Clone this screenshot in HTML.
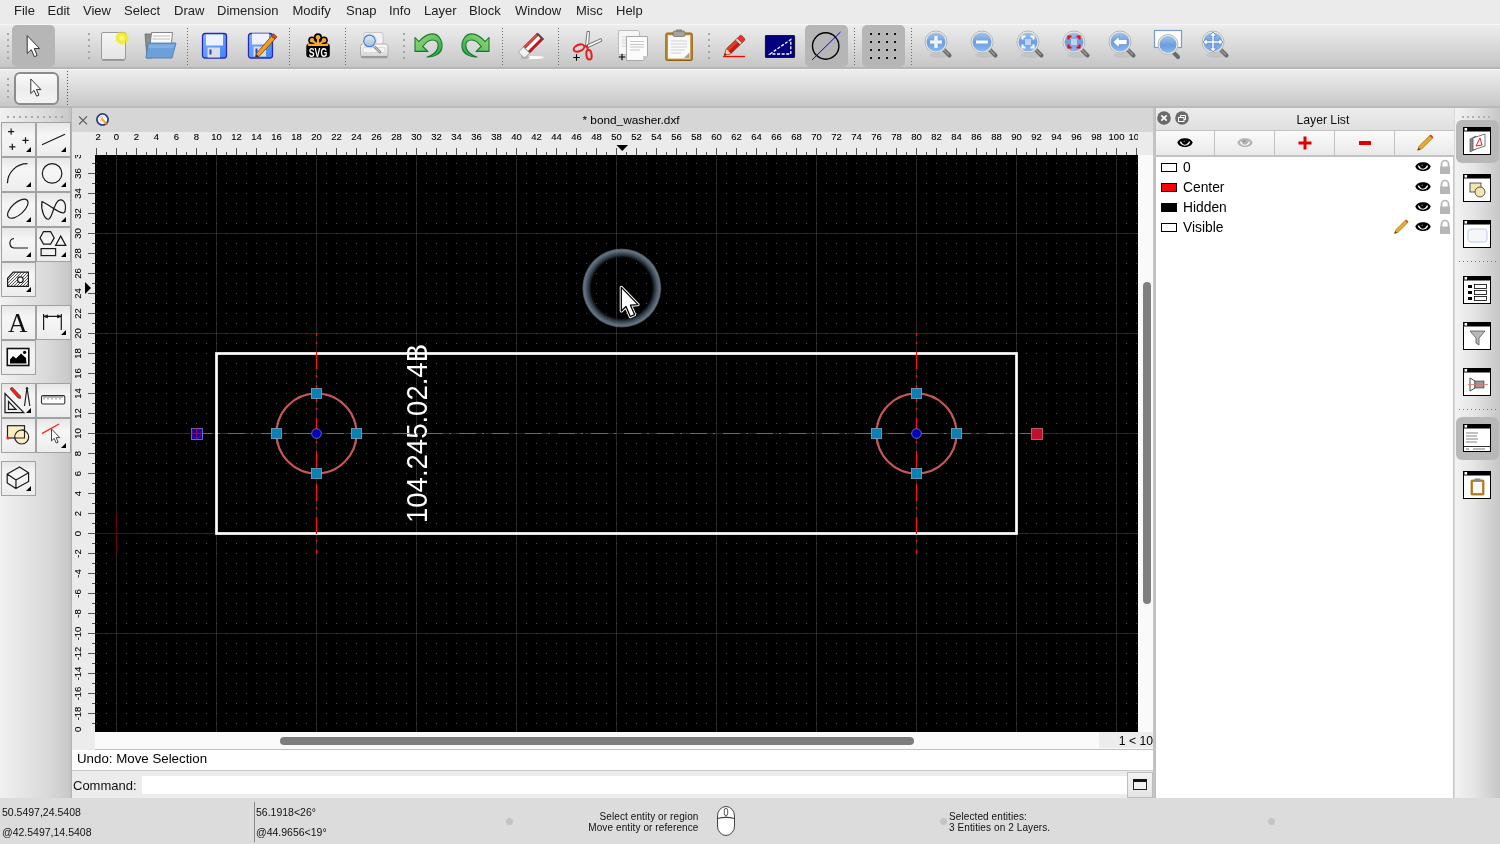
<!DOCTYPE html>
<html><head><meta charset="utf-8"><style>
html,body{margin:0;padding:0;width:1500px;height:844px;overflow:hidden;background:#ececec;font-family:"Liberation Sans", sans-serif;}
.a{position:absolute}
.t{position:absolute;white-space:nowrap;color:#1a1a1a}
</style></head><body><div style="position:absolute;left:0;top:0;width:1500px;height:844px;will-change:transform">

<div class="a" style="left:0;top:0;width:1500px;height:24px;background:#ebebeb"></div>
<div class="t" style="left:14px;top:3px;font-size:13px;line-height:16px;color:#222">File</div>
<div class="t" style="left:47.5px;top:3px;font-size:13px;line-height:16px;color:#222">Edit</div>
<div class="t" style="left:83px;top:3px;font-size:13px;line-height:16px;color:#222">View</div>
<div class="t" style="left:124px;top:3px;font-size:13px;line-height:16px;color:#222">Select</div>
<div class="t" style="left:174px;top:3px;font-size:13px;line-height:16px;color:#222">Draw</div>
<div class="t" style="left:217px;top:3px;font-size:13px;line-height:16px;color:#222">Dimension</div>
<div class="t" style="left:292.5px;top:3px;font-size:13px;line-height:16px;color:#222">Modify</div>
<div class="t" style="left:346px;top:3px;font-size:13px;line-height:16px;color:#222">Snap</div>
<div class="t" style="left:389px;top:3px;font-size:13px;line-height:16px;color:#222">Info</div>
<div class="t" style="left:424px;top:3px;font-size:13px;line-height:16px;color:#222">Layer</div>
<div class="t" style="left:469px;top:3px;font-size:13px;line-height:16px;color:#222">Block</div>
<div class="t" style="left:515px;top:3px;font-size:13px;line-height:16px;color:#222">Window</div>
<div class="t" style="left:576px;top:3px;font-size:13px;line-height:16px;color:#222">Misc</div>
<div class="t" style="left:616px;top:3px;font-size:13px;line-height:16px;color:#222">Help</div>
<div class="a" style="left:0;top:24px;width:1500px;height:45px;background:linear-gradient(#ededed,#c6c6c6);border-top:1px solid #f6f6f6;border-bottom:2px solid #b6b6b6;box-sizing:border-box"></div>
<div class="a" style="left:0;top:69px;width:1500px;height:39px;background:linear-gradient(#ededed,#c8c8c8);border-top:1px solid #f4f4f4;border-bottom:2px solid #b9b9b9;box-sizing:border-box"></div>
<div class="a" style="left:7px;top:33px;width:2px;height:2px;background:#a6a6a6"></div><div class="a" style="left:7px;top:39px;width:2px;height:2px;background:#a6a6a6"></div><div class="a" style="left:7px;top:45px;width:2px;height:2px;background:#a6a6a6"></div><div class="a" style="left:7px;top:51px;width:2px;height:2px;background:#a6a6a6"></div><div class="a" style="left:7px;top:57px;width:2px;height:2px;background:#a6a6a6"></div><div class="a" style="left:12px;top:25px;width:43px;height:42px;background:#b6b6b6;border-radius:5px"></div><svg class="a" style="left:20px;top:30px;" width="30" height="32" viewBox="0 0 30 32"><path d="M7.20 5.60 L7.20 23.42 L11.30 19.64 L14.33 26.66 L17.14 25.47 L14.22 18.56 L19.62 18.56 Z" fill="#fff" stroke="#2a2a2a" stroke-width="0.95" stroke-linejoin="round"/></svg><div class="a" style="left:88px;top:33px;width:2px;height:2px;background:#a6a6a6"></div><div class="a" style="left:88px;top:39px;width:2px;height:2px;background:#a6a6a6"></div><div class="a" style="left:88px;top:45px;width:2px;height:2px;background:#a6a6a6"></div><div class="a" style="left:88px;top:51px;width:2px;height:2px;background:#a6a6a6"></div><div class="a" style="left:88px;top:57px;width:2px;height:2px;background:#a6a6a6"></div><svg class="a" style="left:98px;top:28px;" width="32" height="36" viewBox="0 0 32 36">
      <defs><linearGradient id="nd" x1="0" y1="0" x2="0" y2="1"><stop offset="0" stop-color="#f6f6f6"/><stop offset="1" stop-color="#e4e4e4"/></linearGradient>
      <radialGradient id="glow"><stop offset="0" stop-color="#ffffe8"/><stop offset="0.25" stop-color="#fcf650"/><stop offset="0.6" stop-color="#f0e818" stop-opacity="0.9"/><stop offset="1" stop-color="#f0e800" stop-opacity="0"/></radialGradient></defs>
      <rect x="3.5" y="4.5" width="24" height="27" rx="1.5" fill="url(#nd)" stroke="#9a9a9a" stroke-width="1"/>
      <line x1="4.5" y1="32.2" x2="26.5" y2="32.2" stroke="#888" stroke-width="1"/>
      <circle cx="24" cy="10" r="7.5" fill="url(#glow)"/></svg><svg class="a" style="left:142px;top:28px;" width="36" height="34" viewBox="0 0 36 34">
      <path d="M3 6 L10 6 L11 8 L10 30 L5 30 Z" fill="#8c8c8c" stroke="#6a6a6a" stroke-width="0.8"/>
      <path d="M9.5 4.5 L30.5 4.5 L28 28 L7 28 Z" fill="#fbfbfb" stroke="#7a7a7a" stroke-width="0.9"/>
      <path d="M11 8 L28 8 M10.5 11 L28 11" stroke="#bdbdbd" stroke-width="1.2"/>
      <path d="M6 15 L34 15 L30 30 L4 30 Z" fill="#6d9fd8" stroke="#4f7fb8" stroke-width="0.9"/>
      <path d="M7 16.5 L32.5 16.5 L31.5 20 L6 20 Z" fill="#8ab6e6" opacity="0.7"/></svg><div class="a" style="left:187px;top:28px;width:1px;height:38px;background:repeating-linear-gradient(#6a6a6a 0 1px,transparent 1px 3px)"></div><svg class="a" style="left:201px;top:32px;" width="30" height="30" viewBox="0 0 30 30">
      <defs><linearGradient id="fl" x1="0" y1="0" x2="1" y2="1"><stop offset="0" stop-color="#7fb2ff"/><stop offset="1" stop-color="#3f86f0"/></linearGradient></defs>
      <rect x="1.5" y="1.5" width="24" height="24.5" rx="2.5" fill="url(#fl)" stroke="#2a2ab0" stroke-width="1.3"/>
      <rect x="5" y="2.5" width="17" height="11" fill="#eef2ff"/>
      <rect x="6.5" y="15.5" width="12.5" height="10" fill="#dcdce4"/>
      <rect x="8.5" y="17.5" width="2" height="5" fill="#1a4ad0"/></svg><svg class="a" style="left:247px;top:31px;" width="32" height="31" viewBox="0 0 32 31">
      <defs><linearGradient id="fl2" x1="0" y1="0" x2="1" y2="1"><stop offset="0" stop-color="#7fb2ff"/><stop offset="1" stop-color="#3f86f0"/></linearGradient></defs>
      <rect x="1.5" y="2.5" width="24" height="24.5" rx="2.5" fill="url(#fl2)" stroke="#2a2ab0" stroke-width="1.3"/>
      <rect x="5" y="2.5" width="17" height="11" fill="#eef2ff"/>
      <rect x="6.5" y="15.5" width="12.5" height="10" fill="#dcdce4"/>
      <rect x="8.5" y="17.5" width="2" height="5" fill="#1a4ad0"/><path d="M9 23 L24.5 5 L28 8 L12 25.5 L8.5 26.5 Z" fill="#f0a020" stroke="#8a4a10" stroke-width="0.9"/>
      <path d="M24.5 5 L26.5 2.8 L30 5.8 L28 8 Z" fill="#e04040" stroke="#8a3a10" stroke-width="0.8"/>
      <path d="M9 23 L8.5 26.5 L12 25.5 Z" fill="#333"/></svg><div class="a" style="left:289px;top:28px;width:1px;height:38px;background:repeating-linear-gradient(#6a6a6a 0 1px,transparent 1px 3px)"></div><svg class="a" style="left:303px;top:31px;" width="30" height="30" viewBox="0 0 30 30">
      <g fill="#000"><circle cx="15" cy="6.2" r="4"/><circle cx="9" cy="9.3" r="3.8"/><circle cx="21" cy="9.3" r="3.8"/>
      <path d="M8 14 L15 6 L22 14 Z"/></g>
      <rect x="3.3" y="12.4" width="23.5" height="14" rx="3" fill="#000"/>
      <g fill="#f8aa30"><circle cx="15" cy="6.2" r="2.3"/><circle cx="9" cy="9.3" r="2.2"/><circle cx="21" cy="9.3" r="2.2"/></g>
      <path d="M15 14 L15 7 M15 14 L9.5 9.8 M15 14 L20.5 9.8" stroke="#f8aa30" stroke-width="2.2"/>
      <path d="M5.5 14 L24.5 14" stroke="#f8aa30" stroke-width="1.8" stroke-linecap="round"/>
      <path d="M10 14 L15 11 L20 14 Z" fill="#f8aa30"/>
      <text x="15" y="26" text-anchor="middle" font-family='"Liberation Sans",sans-serif' font-weight="bold" font-size="13" fill="#fff" textLength="18.5" lengthAdjust="spacingAndGlyphs">SVG</text></svg><div class="a" style="left:345px;top:28px;width:1px;height:38px;background:repeating-linear-gradient(#6a6a6a 0 1px,transparent 1px 3px)"></div><svg class="a" style="left:358px;top:29px;" width="32" height="32" viewBox="0 0 32 32">
      <defs><linearGradient id="pr" x1="0" y1="0" x2="0" y2="1"><stop offset="0" stop-color="#fafafa"/><stop offset="0.6" stop-color="#e8e8e8"/><stop offset="1" stop-color="#d0d0d0"/></linearGradient>
      <linearGradient id="pl" x1="0" y1="0" x2="0" y2="1"><stop offset="0" stop-color="#e4ecf6"/><stop offset="1" stop-color="#a4bcd8"/></linearGradient></defs>
      <rect x="6" y="3.5" width="19" height="15" rx="1" fill="#f2f2f2" stroke="#c4c4c4" stroke-width="0.9"/>
      <rect x="2.5" y="15" width="27.5" height="13" rx="2.5" fill="url(#pr)" stroke="#a8a8a8" stroke-width="0.9"/>
      <rect x="3" y="27" width="26.5" height="2.3" rx="1" fill="#9a9a9a"/>
      <rect x="5" y="18.5" width="22" height="5" rx="1" fill="#f6f6f6" stroke="#c8c8c8" stroke-width="0.6"/>
      <line x1="15" y1="16.5" x2="22" y2="23" stroke="#8e8e8e" stroke-width="2.8" stroke-linecap="round"/>
      <line x1="15" y1="16.5" x2="22" y2="23" stroke="#cfcfcf" stroke-width="1" stroke-linecap="round"/>
      <circle cx="11.5" cy="11.9" r="7.2" fill="#f4f4f4" stroke="#d8d8d8" stroke-width="0.8"/>
      <circle cx="11.5" cy="11.9" r="5.8" fill="url(#pl)" stroke="#4a82d0" stroke-width="1.2"/></svg><div class="a" style="left:403px;top:33px;width:2px;height:2px;background:#a6a6a6"></div><div class="a" style="left:403px;top:39px;width:2px;height:2px;background:#a6a6a6"></div><div class="a" style="left:403px;top:45px;width:2px;height:2px;background:#a6a6a6"></div><div class="a" style="left:403px;top:51px;width:2px;height:2px;background:#a6a6a6"></div><div class="a" style="left:403px;top:57px;width:2px;height:2px;background:#a6a6a6"></div><svg class="a" style="left:413px;top:32px;" width="32" height="28" viewBox="0 0 32 28"><defs><linearGradient id="ug" x1="0" y1="0" x2="1" y2="1"><stop offset="0" stop-color="#9ada78"/><stop offset="0.55" stop-color="#62c060"/><stop offset="1" stop-color="#26a040"/></linearGradient></defs>
      <path d="M2 5.5 L2 19.4 L14.8 19.4 L9.8 14.5 C12.5 11 15.5 8 19 8 C22.5 8 25.2 10 25.2 13.5 C25.2 19 20 23.5 14.1 25 C20 25.5 27 22 28.5 17.5 C30.5 11.5 27 2.2 19.8 1.9 C15 1.7 10 5 5.9 9.7 Z" fill="url(#ug)" stroke="#137a2c" stroke-width="1.1" stroke-linejoin="round"/></svg><svg class="a" style="left:459px;top:32px;" width="32" height="28" viewBox="0 0 32 28"><g transform="translate(32,0) scale(-1,1)"><defs><linearGradient id="rg" x1="0" y1="0" x2="1" y2="1"><stop offset="0" stop-color="#9ada78"/><stop offset="0.55" stop-color="#62c060"/><stop offset="1" stop-color="#26a040"/></linearGradient></defs>
      <path d="M2 5.5 L2 19.4 L14.8 19.4 L9.8 14.5 C12.5 11 15.5 8 19 8 C22.5 8 25.2 10 25.2 13.5 C25.2 19 20 23.5 14.1 25 C20 25.5 27 22 28.5 17.5 C30.5 11.5 27 2.2 19.8 1.9 C15 1.7 10 5 5.9 9.7 Z" fill="url(#rg)" stroke="#137a2c" stroke-width="1.1" stroke-linejoin="round"/></g></svg><div class="a" style="left:502px;top:28px;width:1px;height:38px;background:repeating-linear-gradient(#6a6a6a 0 1px,transparent 1px 3px)"></div><svg class="a" style="left:515px;top:30px;" width="32" height="32" viewBox="0 0 32 32">
      <ellipse cx="17" cy="27.5" rx="12" ry="1.6" fill="#fff" opacity="0.9"/>
      <ellipse cx="10" cy="27.5" rx="4.5" ry="1.4" fill="#666" opacity="0.5"/>
      <g transform="translate(16 15.5) rotate(-45)">
        <rect x="-6.5" y="-4.3" width="20" height="8.6" fill="#c81414" stroke="#7a1010" stroke-width="0.7"/>
        <rect x="-6" y="-1.7" width="18" height="3.4" fill="#fff"/>
        <rect x="-6.5" y="-4.3" width="20" height="1.8" fill="#e04a4a"/>
        <rect x="12" y="-4.3" width="1.5" height="8.6" fill="#4a4a4a"/>
        <rect x="-13.5" y="-4.3" width="7.2" height="8.6" fill="#f2f2f2" stroke="#8a8a8a" stroke-width="0.7"/>
      </g></svg><div class="a" style="left:558px;top:28px;width:1px;height:38px;background:repeating-linear-gradient(#6a6a6a 0 1px,transparent 1px 3px)"></div><svg class="a" style="left:570px;top:29px;" width="34" height="34" viewBox="0 0 34 34">
      <path d="M17 2.5 L19.5 2.5 L18.5 17 L15.5 17 Z" fill="#fafafa" stroke="#666" stroke-width="0.9"/>
      <path d="M31 9.5 L32 12 L18 18.5 L17 16 Z" fill="#fafafa" stroke="#666" stroke-width="0.9"/>
      <ellipse cx="9" cy="19" rx="5.6" ry="3.2" transform="rotate(-22 9 19)" fill="none" stroke="#e02020" stroke-width="2"/>
      <ellipse cx="19" cy="25.8" rx="2.6" ry="4.8" transform="rotate(-8 19 25.8)" fill="none" stroke="#e02020" stroke-width="2"/>
      <path d="M14 18 L17 17 L18 21" stroke="#e02020" stroke-width="2" fill="none"/>
      <path d="M3.2 28.5 L9.8 28.5 M6.5 25.2 L6.5 31.8" stroke="#000" stroke-width="1.1"/></svg><svg class="a" style="left:615px;top:28px;" width="36" height="36" viewBox="0 0 36 36">
      <path d="M3.5 2.5 L23 2.5 L24.5 4 L24.5 26.5 L3.5 26.5 Z" fill="#f6f6f6" stroke="#bdbdbd" stroke-width="1"/>
      <path d="M7 9 L20 9 M7 12 L20 12 M7 15 L20 15 M7 18 L20 18" stroke="#d4d4d4" stroke-width="1"/>
      <path d="M11.5 8.5 L32.5 8.5 L32.5 28 L28 32.5 L11.5 32.5 Z" fill="#fbfbfb" stroke="#a8a8a8" stroke-width="1"/>
      <path d="M28 32.5 L28 28 L32.5 28 Z" fill="#c8c8c8"/>
      <path d="M15 13.5 L29 13.5 M15 16.5 L29 16.5 M15 19 L29 19 M15 22 L25 22" stroke="#c6c6c6" stroke-width="1.1"/>
      <path d="M3.7 29 L10.3 29 M7 25.7 L7 32.3" stroke="#000" stroke-width="1.1"/></svg><svg class="a" style="left:663px;top:28px;" width="32" height="36" viewBox="0 0 32 36">
      <rect x="2.8" y="5" width="26.5" height="27.5" rx="1.5" fill="#c48a28" stroke="#8a5e14" stroke-width="1"/>
      <rect x="4.9" y="7.3" width="22.3" height="23.3" fill="#fafafa"/>
      <path d="M8 13 L24 13 M8 16 L24 16 M8 19 L24 19 M8 22 L22 22 M8 25 L18 25" stroke="#d0d0d0" stroke-width="1.1"/>
      <path d="M21 30 L26.5 30 L26.5 24.5 Z" fill="#a0a0a0"/>
      <rect x="10" y="3" width="12" height="5.5" rx="1.5" fill="#a4a49a" stroke="#76766e" stroke-width="0.8"/>
      <rect x="13" y="1.5" width="6" height="2.5" fill="#8a8a82"/></svg><div class="a" style="left:708px;top:33px;width:2px;height:2px;background:#a6a6a6"></div><div class="a" style="left:708px;top:39px;width:2px;height:2px;background:#a6a6a6"></div><div class="a" style="left:708px;top:45px;width:2px;height:2px;background:#a6a6a6"></div><div class="a" style="left:708px;top:51px;width:2px;height:2px;background:#a6a6a6"></div><div class="a" style="left:708px;top:57px;width:2px;height:2px;background:#a6a6a6"></div><svg class="a" style="left:720px;top:32px;" width="28" height="28" viewBox="0 0 28 28">
      <line x1="3" y1="24.5" x2="25" y2="24.5" stroke="#ff0000" stroke-width="1.3"/>
      <g transform="translate(4.3 23.4) rotate(-44.1)">
        <path d="M0 0 L6 -3.2 L25 -3.2 C26.8 -3.2 26.8 3.2 25 3.2 L6 3.2 Z" fill="#e04020" stroke="#6a3a10" stroke-width="0.9" stroke-linejoin="round"/>
        <rect x="6" y="0" width="13.5" height="3.1" fill="#c81818"/>
        <rect x="19" y="-3.1" width="2.2" height="6.2" fill="#d4d4d4"/>
        <path d="M21.2 -3.1 L25 -3.1 C26.6 -3.1 26.6 3.1 25 3.1 L21.2 3.1 Z" fill="#f03030"/>
        <path d="M0.6 0 L6 -3 L6 3 Z" fill="#f2d4ac"/>
        <path d="M0.3 0 L2.3 -1.1 L2.3 1.1 Z" fill="#222"/>
      </g></svg><svg class="a" style="left:764px;top:34px;" width="32" height="25" viewBox="0 0 32 25">
      <rect x="1.5" y="1.5" width="29" height="22" rx="1" fill="#000080" stroke="#1a1a2a" stroke-width="1.2"/>
      <path d="M6 20 L26.8 5.5 L26.8 20 Z" fill="none" stroke="#fff" stroke-width="1.3" stroke-dasharray="3 1.6"/></svg><div class="a" style="left:805px;top:25px;width:43px;height:42px;background:#b6b6b6;border-radius:5px"></div><svg class="a" style="left:808px;top:28px;" width="36" height="36" viewBox="0 0 36 36">
      <circle cx="17.7" cy="18" r="13.2" fill="none" stroke="#000" stroke-width="1.4"/>
      <line x1="4" y1="32" x2="32.5" y2="4" stroke="#0000ff" stroke-width="1"/></svg><div class="a" style="left:854px;top:28px;width:1px;height:38px;background:repeating-linear-gradient(#6a6a6a 0 1px,transparent 1px 3px)"></div><div class="a" style="left:862px;top:25px;width:43px;height:42px;background:#b6b6b6;border-radius:5px"></div><svg class="a" style="left:0px;top:0px;" width="1" height="1" viewBox="0 0 1 1"></svg><svg class="a" style="left:0;top:0" width="910" height="68"><rect x="870" y="33" width="2" height="2" fill="#111"/><rect x="870" y="41" width="2" height="2" fill="#111"/><rect x="870" y="49" width="2" height="2" fill="#111"/><rect x="870" y="57" width="2" height="2" fill="#111"/><rect x="878" y="33" width="2" height="2" fill="#111"/><rect x="878" y="41" width="2" height="2" fill="#111"/><rect x="878" y="49" width="2" height="2" fill="#111"/><rect x="878" y="57" width="2" height="2" fill="#111"/><rect x="886" y="33" width="2" height="2" fill="#111"/><rect x="886" y="41" width="2" height="2" fill="#111"/><rect x="886" y="49" width="2" height="2" fill="#111"/><rect x="886" y="57" width="2" height="2" fill="#111"/><rect x="894" y="33" width="2" height="2" fill="#111"/><rect x="894" y="41" width="2" height="2" fill="#111"/><rect x="894" y="49" width="2" height="2" fill="#111"/><rect x="894" y="57" width="2" height="2" fill="#111"/></svg><div class="a" style="left:911px;top:28px;width:1px;height:38px;background:repeating-linear-gradient(#6a6a6a 0 1px,transparent 1px 3px)"></div><svg class="a" style="left:922px;top:28px" width="34" height="34" viewBox="0 0 34 34">
          <defs><linearGradient id="lz936" x1="0" y1="0" x2="0" y2="1"><stop offset="0" stop-color="#a4c4ec"/><stop offset="0.5" stop-color="#6a9ee0"/><stop offset="1" stop-color="#8ab8f0"/></linearGradient></defs>
          <ellipse cx="17" cy="27" rx="10" ry="3" fill="#000" opacity="0.06"/>
          <line x1="20.5" y1="20.5" x2="27.5" y2="27.5" stroke="#6a6a6a" stroke-width="4" stroke-linecap="round"/>
          <line x1="21" y1="21" x2="26.5" y2="26.5" stroke="#9a9a9a" stroke-width="1.2" stroke-linecap="round"/>
          <circle cx="14" cy="14" r="11" fill="#ecece4" stroke="#b8b8b0" stroke-width="1"/>
          <circle cx="14" cy="14" r="9.5" fill="url(#lz936)"/>
          <path d="M14 8 L14 20 M8 14 L20 14" stroke="#fff" stroke-width="3.2"/><path d="M14 8 L14 20 M8 14 L20 14" stroke="#3a5aa0" stroke-width="0.4" opacity="0.3"/></svg><svg class="a" style="left:968px;top:28px" width="34" height="34" viewBox="0 0 34 34">
          <defs><linearGradient id="lz982" x1="0" y1="0" x2="0" y2="1"><stop offset="0" stop-color="#a4c4ec"/><stop offset="0.5" stop-color="#6a9ee0"/><stop offset="1" stop-color="#8ab8f0"/></linearGradient></defs>
          <ellipse cx="17" cy="27" rx="10" ry="3" fill="#000" opacity="0.06"/>
          <line x1="20.5" y1="20.5" x2="27.5" y2="27.5" stroke="#6a6a6a" stroke-width="4" stroke-linecap="round"/>
          <line x1="21" y1="21" x2="26.5" y2="26.5" stroke="#9a9a9a" stroke-width="1.2" stroke-linecap="round"/>
          <circle cx="14" cy="14" r="11" fill="#ecece4" stroke="#b8b8b0" stroke-width="1"/>
          <circle cx="14" cy="14" r="9.5" fill="url(#lz982)"/>
          <path d="M8 14 L20 14" stroke="#fff" stroke-width="3"/></svg><svg class="a" style="left:1014px;top:28px" width="34" height="34" viewBox="0 0 34 34">
          <defs><linearGradient id="lz1028" x1="0" y1="0" x2="0" y2="1"><stop offset="0" stop-color="#a4c4ec"/><stop offset="0.5" stop-color="#6a9ee0"/><stop offset="1" stop-color="#8ab8f0"/></linearGradient></defs>
          <ellipse cx="17" cy="27" rx="10" ry="3" fill="#000" opacity="0.06"/>
          <line x1="20.5" y1="20.5" x2="27.5" y2="27.5" stroke="#6a6a6a" stroke-width="4" stroke-linecap="round"/>
          <line x1="21" y1="21" x2="26.5" y2="26.5" stroke="#9a9a9a" stroke-width="1.2" stroke-linecap="round"/>
          <circle cx="14" cy="14" r="11" fill="#ecece4" stroke="#b8b8b0" stroke-width="1"/>
          <circle cx="14" cy="14" r="9.5" fill="url(#lz1028)"/>
          <path d="M8.5 11.5 L8.5 8.5 L11.5 8.5 M16.5 8.5 L19.5 8.5 L19.5 11.5 M19.5 16.5 L19.5 19.5 L16.5 19.5 M11.5 19.5 L8.5 19.5 L8.5 16.5" fill="none" stroke="#fff" stroke-width="2"/><rect x="11" y="11" width="6" height="6" fill="#bcd4f4"/></svg><svg class="a" style="left:1060px;top:28px" width="34" height="34" viewBox="0 0 34 34">
          <defs><linearGradient id="lz1074" x1="0" y1="0" x2="0" y2="1"><stop offset="0" stop-color="#a4c4ec"/><stop offset="0.5" stop-color="#6a9ee0"/><stop offset="1" stop-color="#8ab8f0"/></linearGradient></defs>
          <ellipse cx="17" cy="27" rx="10" ry="3" fill="#000" opacity="0.06"/>
          <line x1="20.5" y1="20.5" x2="27.5" y2="27.5" stroke="#6a6a6a" stroke-width="4" stroke-linecap="round"/>
          <line x1="21" y1="21" x2="26.5" y2="26.5" stroke="#9a9a9a" stroke-width="1.2" stroke-linecap="round"/>
          <circle cx="14" cy="14" r="11" fill="#ecece4" stroke="#b8b8b0" stroke-width="1"/>
          <circle cx="14" cy="14" r="9.5" fill="url(#lz1074)"/>
          <path d="M8.5 11.5 L8.5 8.5 L11.5 8.5 M16.5 8.5 L19.5 8.5 L19.5 11.5 M19.5 16.5 L19.5 19.5 L16.5 19.5 M11.5 19.5 L8.5 19.5 L8.5 16.5" fill="none" stroke="#ff0000" stroke-width="2.2"/><rect x="11" y="11" width="6" height="6" fill="#bcd4f4"/></svg><svg class="a" style="left:1106px;top:28px" width="34" height="34" viewBox="0 0 34 34">
          <defs><linearGradient id="lz1120" x1="0" y1="0" x2="0" y2="1"><stop offset="0" stop-color="#a4c4ec"/><stop offset="0.5" stop-color="#6a9ee0"/><stop offset="1" stop-color="#8ab8f0"/></linearGradient></defs>
          <ellipse cx="17" cy="27" rx="10" ry="3" fill="#000" opacity="0.06"/>
          <line x1="20.5" y1="20.5" x2="27.5" y2="27.5" stroke="#6a6a6a" stroke-width="4" stroke-linecap="round"/>
          <line x1="21" y1="21" x2="26.5" y2="26.5" stroke="#9a9a9a" stroke-width="1.2" stroke-linecap="round"/>
          <circle cx="14" cy="14" r="11" fill="#ecece4" stroke="#b8b8b0" stroke-width="1"/>
          <circle cx="14" cy="14" r="9.5" fill="url(#lz1120)"/>
          <path d="M7 14 L13 8.5 L13 11.5 L21 11.5 L21 16.5 L13 16.5 L13 19.5 Z" fill="#fff" stroke="#5a7ab0" stroke-width="0.5"/></svg><svg class="a" style="left:1150px;top:27px" width="36" height="36" viewBox="0 0 36 36">
      <defs><linearGradient id="zw" x1="0" y1="0" x2="0" y2="1"><stop offset="0" stop-color="#a4c4ec"/><stop offset="0.55" stop-color="#6a9ee0"/><stop offset="1" stop-color="#8ab8f0"/></linearGradient></defs>
      <rect x="4.5" y="3.5" width="27" height="17" fill="#fff" stroke="#7a9ad0" stroke-width="1.2"/>
      <line x1="22" y1="24" x2="28" y2="30" stroke="#6a6a6a" stroke-width="4" stroke-linecap="round"/>
      <circle cx="18" cy="17.5" r="10" fill="#ecece4" stroke="#b8b8b0" stroke-width="1"/>
      <circle cx="18" cy="17.5" r="8.5" fill="url(#zw)"/></svg><svg class="a" style="left:1199px;top:28px" width="34" height="34" viewBox="0 0 34 34">
          <defs><linearGradient id="lz1213" x1="0" y1="0" x2="0" y2="1"><stop offset="0" stop-color="#a4c4ec"/><stop offset="0.5" stop-color="#6a9ee0"/><stop offset="1" stop-color="#8ab8f0"/></linearGradient></defs>
          <ellipse cx="17" cy="27" rx="10" ry="3" fill="#000" opacity="0.06"/>
          <line x1="20.5" y1="20.5" x2="27.5" y2="27.5" stroke="#6a6a6a" stroke-width="4" stroke-linecap="round"/>
          <line x1="21" y1="21" x2="26.5" y2="26.5" stroke="#9a9a9a" stroke-width="1.2" stroke-linecap="round"/>
          <circle cx="14" cy="14" r="11" fill="#ecece4" stroke="#b8b8b0" stroke-width="1"/>
          <circle cx="14" cy="14" r="9.5" fill="url(#lz1213)"/>
          <path d="M14 4 L10.5 8 L12.8 8 L12.8 12.8 L8 12.8 L8 10.5 L4 14 L8 17.5 L8 15.2 L12.8 15.2 L12.8 20 L10.5 20 L14 24 L17.5 20 L15.2 20 L15.2 15.2 L20 15.2 L20 17.5 L24 14 L20 10.5 L20 12.8 L15.2 12.8 L15.2 8 L17.5 8 Z" fill="#fff" stroke="#5a82c8" stroke-width="0.8"/></svg>
<div class="a" style="left:7px;top:78px;width:2px;height:2px;background:#a6a6a6"></div><div class="a" style="left:7px;top:84px;width:2px;height:2px;background:#a6a6a6"></div><div class="a" style="left:7px;top:90px;width:2px;height:2px;background:#a6a6a6"></div><div class="a" style="left:7px;top:96px;width:2px;height:2px;background:#a6a6a6"></div><div class="a" style="left:14px;top:72px;width:45px;height:33px;border:2px solid #8c8c8c;border-radius:6px;box-sizing:border-box;background:linear-gradient(#fbfbfb,#ececec 50%,#f4f4f4)"></div><svg class="a" style="left:24px;top:74px;" width="24" height="28" viewBox="0 0 24 28"><path d="M6.80 5.00 L6.80 19.52 L10.14 16.44 L12.61 22.16 L14.90 21.19 L12.52 15.56 L16.92 15.56 Z" fill="#fff" stroke="#333" stroke-width="1" stroke-linejoin="round"/></svg><div class="a" style="left:67px;top:71px;width:1px;height:35px;background:repeating-linear-gradient(#555 0 1px,transparent 1px 3px)"></div>
<div class="a" style="left:0;top:108px;width:72px;height:690px;background:linear-gradient(90deg,#f1f1f1,#dadada 65%,#cacaca 95%,#c2c2c2);border-right:1px solid #b4b4b4;box-sizing:border-box"></div>
<div class="a" style="left:7px;top:116px;width:2px;height:2px;background:#a8a8a8"></div><div class="a" style="left:13px;top:116px;width:2px;height:2px;background:#a8a8a8"></div><div class="a" style="left:19px;top:116px;width:2px;height:2px;background:#a8a8a8"></div><div class="a" style="left:25px;top:116px;width:2px;height:2px;background:#a8a8a8"></div><div class="a" style="left:31px;top:116px;width:2px;height:2px;background:#a8a8a8"></div><div class="a" style="left:37px;top:116px;width:2px;height:2px;background:#a8a8a8"></div><div class="a" style="left:43px;top:116px;width:2px;height:2px;background:#a8a8a8"></div><div class="a" style="left:49px;top:116px;width:2px;height:2px;background:#a8a8a8"></div><div class="a" style="left:55px;top:116px;width:2px;height:2px;background:#a8a8a8"></div><div class="a" style="left:61px;top:116px;width:2px;height:2px;background:#a8a8a8"></div><div class="a" style="left:1px;top:122px;width:35px;height:35px;border:1px solid #a2a2a2;box-sizing:border-box;background:linear-gradient(#e6e6e6,#f6f6f6 35%,#f2f2f2 70%,#ececec)"></div><svg class="a" style="left:1px;top:122px;" width="35" height="35" viewBox="0 0 35 35"><path d="M7 9.7 L13.2 9.7 M10.1 6.6 L10.1 12.8 M21.4 18.3 L27.6 18.3 M24.5 15.2 L24.5 21.4 M8.2 24.8 L14.4 24.8 M11.3 21.7 L11.3 27.9" fill="none" stroke="#1a1a1a" stroke-width="1.2"/><path d="M25 30 L30 30 L30 25 Z" fill="#000"/></svg><div class="a" style="left:36px;top:122px;width:35px;height:35px;border:1px solid #a2a2a2;box-sizing:border-box;background:linear-gradient(#e6e6e6,#f6f6f6 35%,#f2f2f2 70%,#ececec)"></div><svg class="a" style="left:36px;top:122px;" width="35" height="35" viewBox="0 0 35 35"><path d="M6 22.7 L29 12.2" fill="none" stroke="#1a1a1a" stroke-width="1.2"/><path d="M25 30 L30 30 L30 25 Z" fill="#000"/></svg><div class="a" style="left:1px;top:157px;width:35px;height:35px;border:1px solid #a2a2a2;box-sizing:border-box;background:linear-gradient(#e6e6e6,#f6f6f6 35%,#f2f2f2 70%,#ececec)"></div><svg class="a" style="left:1px;top:157px;" width="35" height="35" viewBox="0 0 35 35"><path d="M6.4 26.2 A20 20 0 0 1 26.4 6.6" fill="none" stroke="#1a1a1a" stroke-width="1.2"/><path d="M25 30 L30 30 L30 25 Z" fill="#000"/></svg><div class="a" style="left:36px;top:157px;width:35px;height:35px;border:1px solid #a2a2a2;box-sizing:border-box;background:linear-gradient(#e6e6e6,#f6f6f6 35%,#f2f2f2 70%,#ececec)"></div><svg class="a" style="left:36px;top:157px;" width="35" height="35" viewBox="0 0 35 35"><circle cx="16.1" cy="16.4" r="9.8" fill="none" stroke="#1a1a1a" stroke-width="1.2"/><path d="M25 30 L30 30 L30 25 Z" fill="#000"/></svg><div class="a" style="left:1px;top:192px;width:35px;height:35px;border:1px solid #a2a2a2;box-sizing:border-box;background:linear-gradient(#e6e6e6,#f6f6f6 35%,#f2f2f2 70%,#ececec)"></div><svg class="a" style="left:1px;top:192px;" width="35" height="35" viewBox="0 0 35 35"><ellipse cx="16.8" cy="16.7" rx="12.6" ry="6" transform="rotate(-42 16.8 16.7)" fill="none" stroke="#1a1a1a" stroke-width="1.2"/><path d="M25 30 L30 30 L30 25 Z" fill="#000"/></svg><div class="a" style="left:36px;top:192px;width:35px;height:35px;border:1px solid #a2a2a2;box-sizing:border-box;background:linear-gradient(#e6e6e6,#f6f6f6 35%,#f2f2f2 70%,#ececec)"></div><svg class="a" style="left:36px;top:192px;" width="35" height="35" viewBox="0 0 35 35"><path d="M6 9.5 C4.5 18 9 29 13 27 C16.5 25 17.5 13 22 9 C26 5.5 31 10 29 19.5 C27.5 25 14 13 6 9.5 Z" fill="none" stroke="#1a1a1a" stroke-width="1.2"/><path d="M25 30 L30 30 L30 25 Z" fill="#000"/></svg><div class="a" style="left:1px;top:227px;width:35px;height:35px;border:1px solid #a2a2a2;box-sizing:border-box;background:linear-gradient(#e6e6e6,#f6f6f6 35%,#f2f2f2 70%,#ececec)"></div><svg class="a" style="left:1px;top:227px;" width="35" height="35" viewBox="0 0 35 35"><path d="M13 11.5 A4.8 4.8 0 0 0 13 21 L27 21" fill="none" stroke="#1a1a1a" stroke-width="1.2"/><path d="M25 30 L30 30 L30 25 Z" fill="#000"/></svg><div class="a" style="left:36px;top:227px;width:35px;height:35px;border:1px solid #a2a2a2;box-sizing:border-box;background:linear-gradient(#e6e6e6,#f6f6f6 35%,#f2f2f2 70%,#ececec)"></div><svg class="a" style="left:36px;top:227px;" width="35" height="35" viewBox="0 0 35 35"><path d="M7.5 4.7 L14.6 4.7 L18.2 10.9 L14.6 17.1 L7.5 17.1 L4 10.9 Z" fill="none" stroke="#1a1a1a" stroke-width="1.2"/><path d="M19.6 18.4 L29.8 18.4 L24.7 9.1 Z" fill="none" stroke="#1a1a1a" stroke-width="1.2"/><rect x="5.1" y="21.6" width="14.5" height="7" fill="none" stroke="#1a1a1a" stroke-width="1.2"/><path d="M25 30 L30 30 L30 25 Z" fill="#000"/></svg><div class="a" style="left:1px;top:262px;width:35px;height:35px;border:1px solid #a2a2a2;box-sizing:border-box;background:linear-gradient(#e6e6e6,#f6f6f6 35%,#f2f2f2 70%,#ececec)"></div><svg class="a" style="left:1px;top:262px;" width="35" height="35" viewBox="0 0 35 35"><defs><clipPath id="hc"><path d="M6.6 24.3 L6.6 16.3 L12.3 10.1 L27.4 10.1 L27.4 24.3 Z"/></clipPath></defs><g clip-path="url(#hc)"><line x1="-6" y1="25" x2="9" y2="10" stroke="#333" stroke-width="0.8"/><line x1="-3" y1="25" x2="12" y2="10" stroke="#333" stroke-width="0.8"/><line x1="0" y1="25" x2="15" y2="10" stroke="#333" stroke-width="0.8"/><line x1="3" y1="25" x2="18" y2="10" stroke="#333" stroke-width="0.8"/><line x1="6" y1="25" x2="21" y2="10" stroke="#333" stroke-width="0.8"/><line x1="9" y1="25" x2="24" y2="10" stroke="#333" stroke-width="0.8"/><line x1="12" y1="25" x2="27" y2="10" stroke="#333" stroke-width="0.8"/><line x1="15" y1="25" x2="30" y2="10" stroke="#333" stroke-width="0.8"/><line x1="18" y1="25" x2="33" y2="10" stroke="#333" stroke-width="0.8"/><line x1="21" y1="25" x2="36" y2="10" stroke="#333" stroke-width="0.8"/><line x1="24" y1="25" x2="39" y2="10" stroke="#333" stroke-width="0.8"/><line x1="27" y1="25" x2="42" y2="10" stroke="#333" stroke-width="0.8"/></g><path d="M6.6 24.3 L6.6 16.3 L12.3 10.1 L27.4 10.1 L27.4 24.3 Z" fill="none" stroke="#1a1a1a" stroke-width="1.2"/><circle cx="19.4" cy="17.7" r="2.8" fill="#f4f4f4" stroke="#1a1a1a" stroke-width="1.2"/><path d="M25 30 L30 30 L30 25 Z" fill="#000"/></svg><div class="a" style="left:1px;top:305px;width:35px;height:35px;border:1px solid #a2a2a2;box-sizing:border-box;background:linear-gradient(#e6e6e6,#f6f6f6 35%,#f2f2f2 70%,#ececec)"></div><svg class="a" style="left:1px;top:305px;" width="35" height="35" viewBox="0 0 35 35"><text x="16.8" y="26.6" text-anchor="middle" font-family='"Liberation Serif",serif' font-size="27" fill="#111">A</text></svg><div class="a" style="left:36px;top:305px;width:35px;height:35px;border:1px solid #a2a2a2;box-sizing:border-box;background:linear-gradient(#e6e6e6,#f6f6f6 35%,#f2f2f2 70%,#ececec)"></div><svg class="a" style="left:36px;top:305px;" width="35" height="35" viewBox="0 0 35 35"><path d="M7.6 9 L7.6 25 M25.3 9 L25.3 25 M8 11.4 L25 11.4" fill="none" stroke="#1a1a1a" stroke-width="1.2"/><path d="M8 11.4 L11.5 9.8 L11.5 13 Z M25 11.4 L21.5 9.8 L21.5 13 Z" fill="#111" stroke="#111" stroke-width="0.6"/><path d="M25 30 L30 30 L30 25 Z" fill="#000"/></svg><div class="a" style="left:1px;top:340px;width:35px;height:35px;border:1px solid #a2a2a2;box-sizing:border-box;background:linear-gradient(#e6e6e6,#f6f6f6 35%,#f2f2f2 70%,#ececec)"></div><svg class="a" style="left:1px;top:340px;" width="35" height="35" viewBox="0 0 35 35"><rect x="6.3" y="8.5" width="21.5" height="17" fill="#fff" stroke="#111" stroke-width="1.6"/><path d="M9 23.5 L9 19.5 L12 16 L15 18.5 L20 13.5 L25 18 L25.5 23.5 Z" fill="#000"/><circle cx="23.6" cy="12.3" r="1.6" fill="#000"/></svg><div class="a" style="left:1px;top:383px;width:35px;height:35px;border:1px solid #a2a2a2;box-sizing:border-box;background:linear-gradient(#e6e6e6,#f6f6f6 35%,#f2f2f2 70%,#ececec)"></div><svg class="a" style="left:1px;top:383px;" width="35" height="35" viewBox="0 0 35 35"><path d="M4 10.5 L4 29.7 L22.8 29.7 Z" fill="none" stroke="#1a1a1a" stroke-width="1.2"/><path d="M7.5 18.5 L7.5 26.3 L15 26.3 Z" fill="none" stroke="#1a1a1a" stroke-width="1.2"/>
      <path d="M9 6 L11 4 L19.5 13 L19.5 15.5 L17 15 Z" fill="#e02a1a" stroke="#6a1a0a" stroke-width="0.6"/>
      <path d="M26 4.5 L23.5 23 M26 4.5 L28.8 23" fill="none" stroke="#222" stroke-width="1.2"/><circle cx="26" cy="5.5" r="1.3" fill="#222"/><path d="M25 30 L30 30 L30 25 Z" fill="#000"/></svg><div class="a" style="left:36px;top:383px;width:35px;height:35px;border:1px solid #a2a2a2;box-sizing:border-box;background:linear-gradient(#e6e6e6,#f6f6f6 35%,#f2f2f2 70%,#ececec)"></div><svg class="a" style="left:36px;top:383px;" width="35" height="35" viewBox="0 0 35 35"><rect x="5.5" y="12.6" width="23.3" height="8.4" rx="1.5" fill="#fff" stroke="#333" stroke-width="1.1"/><line x1="8" y1="13" x2="8" y2="16.5" stroke="#444" stroke-width="0.7"/><line x1="10" y1="13" x2="10" y2="15" stroke="#444" stroke-width="0.7"/><line x1="12" y1="13" x2="12" y2="16.5" stroke="#444" stroke-width="0.7"/><line x1="14" y1="13" x2="14" y2="15" stroke="#444" stroke-width="0.7"/><line x1="16" y1="13" x2="16" y2="16.5" stroke="#444" stroke-width="0.7"/><line x1="18" y1="13" x2="18" y2="15" stroke="#444" stroke-width="0.7"/><line x1="20" y1="13" x2="20" y2="16.5" stroke="#444" stroke-width="0.7"/><line x1="22" y1="13" x2="22" y2="15" stroke="#444" stroke-width="0.7"/><line x1="24" y1="13" x2="24" y2="16.5" stroke="#444" stroke-width="0.7"/><line x1="26" y1="13" x2="26" y2="15" stroke="#444" stroke-width="0.7"/></svg><div class="a" style="left:1px;top:418px;width:35px;height:35px;border:1px solid #a2a2a2;box-sizing:border-box;background:linear-gradient(#e6e6e6,#f6f6f6 35%,#f2f2f2 70%,#ececec)"></div><svg class="a" style="left:1px;top:418px;" width="35" height="35" viewBox="0 0 35 35"><rect x="6.5" y="7.7" width="17" height="12.3" fill="#fdf0c0" stroke="#222" stroke-width="1.2"/><circle cx="20.7" cy="19" r="7" fill="#fdf0c0" stroke="#222" stroke-width="1.2"/><path d="M20.7 12 L23.5 12 L23.5 20 L13.8 20" fill="none" stroke="#222" stroke-width="1.1"/><circle cx="6.9" cy="20" r="1.5" fill="#ff2020"/></svg><div class="a" style="left:36px;top:418px;width:35px;height:35px;border:1px solid #a2a2a2;box-sizing:border-box;background:linear-gradient(#e6e6e6,#f6f6f6 35%,#f2f2f2 70%,#ececec)"></div><svg class="a" style="left:36px;top:418px;" width="35" height="35" viewBox="0 0 35 35"><path d="M5.9 15.6 L23 6" stroke="#ff2020" stroke-width="1.3"/><path d="M15.50 11.00 L15.50 22.88 L18.24 20.36 L20.25 25.04 L22.12 24.25 L20.18 19.64 L23.78 19.64 Z" fill="#fff" stroke="#333" stroke-width="0.9"/><path d="M25 30 L30 30 L30 25 Z" fill="#000"/></svg><div class="a" style="left:1px;top:461px;width:35px;height:35px;border:1px solid #a2a2a2;box-sizing:border-box;background:linear-gradient(#e6e6e6,#f6f6f6 35%,#f2f2f2 70%,#ececec)"></div><svg class="a" style="left:1px;top:461px;" width="35" height="35" viewBox="0 0 35 35"><path d="M6.2 13 L18.5 5.9 L27.6 11.7 L15 19 Z M6.2 13 L6.2 22 L14.9 27.5 L15 19 M27.6 11.7 L27.6 20.5 L14.9 27.5" fill="none" stroke="#1a1a1a" stroke-width="1.2" stroke-linejoin="round"/><path d="M25 30 L30 30 L30 25 Z" fill="#000"/></svg>
<div class="a" style="left:72px;top:108px;width:1082px;height:24px;background:#d6d6d6"></div>
<div class="t" style="left:582.5px;top:113px;font-size:11.8px;line-height:14px;color:#000">* bond_washer.dxf</div>
<svg class="a" style="left:76px;top:112.5px" width="36" height="14" viewBox="0 0 36 14"><path d="M3 3.3 L11 11.3 M11 3.3 L3 11.3" stroke="#555" stroke-width="1.1"/><circle cx="26.5" cy="6.5" r="5.6" fill="#f4f4f8" stroke="#2a3f8f" stroke-width="1.8"/><path d="M23.5 5 L26 3 M24 8 L27 4" stroke="#e07070" stroke-width="0.6"/><path d="M25.5 5.5 L30 10.5" stroke="#f0b020" stroke-width="2"/><circle cx="30.5" cy="11" r="1.1" fill="#e06060"/></svg>
<div style="position:absolute;left:72px;top:132px;width:1082px;height:23px;background:#ebebeb"></div><svg width="1043" height="23" style="position:absolute;left:95px;top:132px" ><line x1="1.5" y1="16" x2="1.5" y2="23" stroke="#555" stroke-width="1"/><text x="1.5" y="8.3" text-anchor="middle" font-family='"Liberation Sans", sans-serif' font-size="9.5" fill="#000" stroke="#000" stroke-width="0.12">-2</text><line x1="11.5" y1="20" x2="11.5" y2="23" stroke="#555" stroke-width="1"/><line x1="21.5" y1="16" x2="21.5" y2="23" stroke="#555" stroke-width="1"/><text x="21.5" y="8.3" text-anchor="middle" font-family='"Liberation Sans", sans-serif' font-size="9.5" fill="#000" stroke="#000" stroke-width="0.12">0</text><line x1="31.5" y1="20" x2="31.5" y2="23" stroke="#555" stroke-width="1"/><line x1="41.5" y1="16" x2="41.5" y2="23" stroke="#555" stroke-width="1"/><text x="41.5" y="8.3" text-anchor="middle" font-family='"Liberation Sans", sans-serif' font-size="9.5" fill="#000" stroke="#000" stroke-width="0.12">2</text><line x1="51.5" y1="20" x2="51.5" y2="23" stroke="#555" stroke-width="1"/><line x1="61.5" y1="16" x2="61.5" y2="23" stroke="#555" stroke-width="1"/><text x="61.5" y="8.3" text-anchor="middle" font-family='"Liberation Sans", sans-serif' font-size="9.5" fill="#000" stroke="#000" stroke-width="0.12">4</text><line x1="71.5" y1="20" x2="71.5" y2="23" stroke="#555" stroke-width="1"/><line x1="81.5" y1="16" x2="81.5" y2="23" stroke="#555" stroke-width="1"/><text x="81.5" y="8.3" text-anchor="middle" font-family='"Liberation Sans", sans-serif' font-size="9.5" fill="#000" stroke="#000" stroke-width="0.12">6</text><line x1="91.5" y1="20" x2="91.5" y2="23" stroke="#555" stroke-width="1"/><line x1="101.5" y1="16" x2="101.5" y2="23" stroke="#555" stroke-width="1"/><text x="101.5" y="8.3" text-anchor="middle" font-family='"Liberation Sans", sans-serif' font-size="9.5" fill="#000" stroke="#000" stroke-width="0.12">8</text><line x1="111.5" y1="20" x2="111.5" y2="23" stroke="#555" stroke-width="1"/><line x1="121.5" y1="16" x2="121.5" y2="23" stroke="#555" stroke-width="1"/><text x="121.5" y="8.3" text-anchor="middle" font-family='"Liberation Sans", sans-serif' font-size="9.5" fill="#000" stroke="#000" stroke-width="0.12">10</text><line x1="131.5" y1="20" x2="131.5" y2="23" stroke="#555" stroke-width="1"/><line x1="141.5" y1="16" x2="141.5" y2="23" stroke="#555" stroke-width="1"/><text x="141.5" y="8.3" text-anchor="middle" font-family='"Liberation Sans", sans-serif' font-size="9.5" fill="#000" stroke="#000" stroke-width="0.12">12</text><line x1="151.5" y1="20" x2="151.5" y2="23" stroke="#555" stroke-width="1"/><line x1="161.5" y1="16" x2="161.5" y2="23" stroke="#555" stroke-width="1"/><text x="161.5" y="8.3" text-anchor="middle" font-family='"Liberation Sans", sans-serif' font-size="9.5" fill="#000" stroke="#000" stroke-width="0.12">14</text><line x1="171.5" y1="20" x2="171.5" y2="23" stroke="#555" stroke-width="1"/><line x1="181.5" y1="16" x2="181.5" y2="23" stroke="#555" stroke-width="1"/><text x="181.5" y="8.3" text-anchor="middle" font-family='"Liberation Sans", sans-serif' font-size="9.5" fill="#000" stroke="#000" stroke-width="0.12">16</text><line x1="191.5" y1="20" x2="191.5" y2="23" stroke="#555" stroke-width="1"/><line x1="201.5" y1="16" x2="201.5" y2="23" stroke="#555" stroke-width="1"/><text x="201.5" y="8.3" text-anchor="middle" font-family='"Liberation Sans", sans-serif' font-size="9.5" fill="#000" stroke="#000" stroke-width="0.12">18</text><line x1="211.5" y1="20" x2="211.5" y2="23" stroke="#555" stroke-width="1"/><line x1="221.5" y1="16" x2="221.5" y2="23" stroke="#555" stroke-width="1"/><text x="221.5" y="8.3" text-anchor="middle" font-family='"Liberation Sans", sans-serif' font-size="9.5" fill="#000" stroke="#000" stroke-width="0.12">20</text><line x1="231.5" y1="20" x2="231.5" y2="23" stroke="#555" stroke-width="1"/><line x1="241.5" y1="16" x2="241.5" y2="23" stroke="#555" stroke-width="1"/><text x="241.5" y="8.3" text-anchor="middle" font-family='"Liberation Sans", sans-serif' font-size="9.5" fill="#000" stroke="#000" stroke-width="0.12">22</text><line x1="251.5" y1="20" x2="251.5" y2="23" stroke="#555" stroke-width="1"/><line x1="261.5" y1="16" x2="261.5" y2="23" stroke="#555" stroke-width="1"/><text x="261.5" y="8.3" text-anchor="middle" font-family='"Liberation Sans", sans-serif' font-size="9.5" fill="#000" stroke="#000" stroke-width="0.12">24</text><line x1="271.5" y1="20" x2="271.5" y2="23" stroke="#555" stroke-width="1"/><line x1="281.5" y1="16" x2="281.5" y2="23" stroke="#555" stroke-width="1"/><text x="281.5" y="8.3" text-anchor="middle" font-family='"Liberation Sans", sans-serif' font-size="9.5" fill="#000" stroke="#000" stroke-width="0.12">26</text><line x1="291.5" y1="20" x2="291.5" y2="23" stroke="#555" stroke-width="1"/><line x1="301.5" y1="16" x2="301.5" y2="23" stroke="#555" stroke-width="1"/><text x="301.5" y="8.3" text-anchor="middle" font-family='"Liberation Sans", sans-serif' font-size="9.5" fill="#000" stroke="#000" stroke-width="0.12">28</text><line x1="311.5" y1="20" x2="311.5" y2="23" stroke="#555" stroke-width="1"/><line x1="321.5" y1="16" x2="321.5" y2="23" stroke="#555" stroke-width="1"/><text x="321.5" y="8.3" text-anchor="middle" font-family='"Liberation Sans", sans-serif' font-size="9.5" fill="#000" stroke="#000" stroke-width="0.12">30</text><line x1="331.5" y1="20" x2="331.5" y2="23" stroke="#555" stroke-width="1"/><line x1="341.5" y1="16" x2="341.5" y2="23" stroke="#555" stroke-width="1"/><text x="341.5" y="8.3" text-anchor="middle" font-family='"Liberation Sans", sans-serif' font-size="9.5" fill="#000" stroke="#000" stroke-width="0.12">32</text><line x1="351.5" y1="20" x2="351.5" y2="23" stroke="#555" stroke-width="1"/><line x1="361.5" y1="16" x2="361.5" y2="23" stroke="#555" stroke-width="1"/><text x="361.5" y="8.3" text-anchor="middle" font-family='"Liberation Sans", sans-serif' font-size="9.5" fill="#000" stroke="#000" stroke-width="0.12">34</text><line x1="371.5" y1="20" x2="371.5" y2="23" stroke="#555" stroke-width="1"/><line x1="381.5" y1="16" x2="381.5" y2="23" stroke="#555" stroke-width="1"/><text x="381.5" y="8.3" text-anchor="middle" font-family='"Liberation Sans", sans-serif' font-size="9.5" fill="#000" stroke="#000" stroke-width="0.12">36</text><line x1="391.5" y1="20" x2="391.5" y2="23" stroke="#555" stroke-width="1"/><line x1="401.5" y1="16" x2="401.5" y2="23" stroke="#555" stroke-width="1"/><text x="401.5" y="8.3" text-anchor="middle" font-family='"Liberation Sans", sans-serif' font-size="9.5" fill="#000" stroke="#000" stroke-width="0.12">38</text><line x1="411.5" y1="20" x2="411.5" y2="23" stroke="#555" stroke-width="1"/><line x1="421.5" y1="16" x2="421.5" y2="23" stroke="#555" stroke-width="1"/><text x="421.5" y="8.3" text-anchor="middle" font-family='"Liberation Sans", sans-serif' font-size="9.5" fill="#000" stroke="#000" stroke-width="0.12">40</text><line x1="431.5" y1="20" x2="431.5" y2="23" stroke="#555" stroke-width="1"/><line x1="441.5" y1="16" x2="441.5" y2="23" stroke="#555" stroke-width="1"/><text x="441.5" y="8.3" text-anchor="middle" font-family='"Liberation Sans", sans-serif' font-size="9.5" fill="#000" stroke="#000" stroke-width="0.12">42</text><line x1="451.5" y1="20" x2="451.5" y2="23" stroke="#555" stroke-width="1"/><line x1="461.5" y1="16" x2="461.5" y2="23" stroke="#555" stroke-width="1"/><text x="461.5" y="8.3" text-anchor="middle" font-family='"Liberation Sans", sans-serif' font-size="9.5" fill="#000" stroke="#000" stroke-width="0.12">44</text><line x1="471.5" y1="20" x2="471.5" y2="23" stroke="#555" stroke-width="1"/><line x1="481.5" y1="16" x2="481.5" y2="23" stroke="#555" stroke-width="1"/><text x="481.5" y="8.3" text-anchor="middle" font-family='"Liberation Sans", sans-serif' font-size="9.5" fill="#000" stroke="#000" stroke-width="0.12">46</text><line x1="491.5" y1="20" x2="491.5" y2="23" stroke="#555" stroke-width="1"/><line x1="501.5" y1="16" x2="501.5" y2="23" stroke="#555" stroke-width="1"/><text x="501.5" y="8.3" text-anchor="middle" font-family='"Liberation Sans", sans-serif' font-size="9.5" fill="#000" stroke="#000" stroke-width="0.12">48</text><line x1="511.5" y1="20" x2="511.5" y2="23" stroke="#555" stroke-width="1"/><line x1="521.5" y1="16" x2="521.5" y2="23" stroke="#555" stroke-width="1"/><text x="521.5" y="8.3" text-anchor="middle" font-family='"Liberation Sans", sans-serif' font-size="9.5" fill="#000" stroke="#000" stroke-width="0.12">50</text><line x1="531.5" y1="20" x2="531.5" y2="23" stroke="#555" stroke-width="1"/><line x1="541.5" y1="16" x2="541.5" y2="23" stroke="#555" stroke-width="1"/><text x="541.5" y="8.3" text-anchor="middle" font-family='"Liberation Sans", sans-serif' font-size="9.5" fill="#000" stroke="#000" stroke-width="0.12">52</text><line x1="551.5" y1="20" x2="551.5" y2="23" stroke="#555" stroke-width="1"/><line x1="561.5" y1="16" x2="561.5" y2="23" stroke="#555" stroke-width="1"/><text x="561.5" y="8.3" text-anchor="middle" font-family='"Liberation Sans", sans-serif' font-size="9.5" fill="#000" stroke="#000" stroke-width="0.12">54</text><line x1="571.5" y1="20" x2="571.5" y2="23" stroke="#555" stroke-width="1"/><line x1="581.5" y1="16" x2="581.5" y2="23" stroke="#555" stroke-width="1"/><text x="581.5" y="8.3" text-anchor="middle" font-family='"Liberation Sans", sans-serif' font-size="9.5" fill="#000" stroke="#000" stroke-width="0.12">56</text><line x1="591.5" y1="20" x2="591.5" y2="23" stroke="#555" stroke-width="1"/><line x1="601.5" y1="16" x2="601.5" y2="23" stroke="#555" stroke-width="1"/><text x="601.5" y="8.3" text-anchor="middle" font-family='"Liberation Sans", sans-serif' font-size="9.5" fill="#000" stroke="#000" stroke-width="0.12">58</text><line x1="611.5" y1="20" x2="611.5" y2="23" stroke="#555" stroke-width="1"/><line x1="621.5" y1="16" x2="621.5" y2="23" stroke="#555" stroke-width="1"/><text x="621.5" y="8.3" text-anchor="middle" font-family='"Liberation Sans", sans-serif' font-size="9.5" fill="#000" stroke="#000" stroke-width="0.12">60</text><line x1="631.5" y1="20" x2="631.5" y2="23" stroke="#555" stroke-width="1"/><line x1="641.5" y1="16" x2="641.5" y2="23" stroke="#555" stroke-width="1"/><text x="641.5" y="8.3" text-anchor="middle" font-family='"Liberation Sans", sans-serif' font-size="9.5" fill="#000" stroke="#000" stroke-width="0.12">62</text><line x1="651.5" y1="20" x2="651.5" y2="23" stroke="#555" stroke-width="1"/><line x1="661.5" y1="16" x2="661.5" y2="23" stroke="#555" stroke-width="1"/><text x="661.5" y="8.3" text-anchor="middle" font-family='"Liberation Sans", sans-serif' font-size="9.5" fill="#000" stroke="#000" stroke-width="0.12">64</text><line x1="671.5" y1="20" x2="671.5" y2="23" stroke="#555" stroke-width="1"/><line x1="681.5" y1="16" x2="681.5" y2="23" stroke="#555" stroke-width="1"/><text x="681.5" y="8.3" text-anchor="middle" font-family='"Liberation Sans", sans-serif' font-size="9.5" fill="#000" stroke="#000" stroke-width="0.12">66</text><line x1="691.5" y1="20" x2="691.5" y2="23" stroke="#555" stroke-width="1"/><line x1="701.5" y1="16" x2="701.5" y2="23" stroke="#555" stroke-width="1"/><text x="701.5" y="8.3" text-anchor="middle" font-family='"Liberation Sans", sans-serif' font-size="9.5" fill="#000" stroke="#000" stroke-width="0.12">68</text><line x1="711.5" y1="20" x2="711.5" y2="23" stroke="#555" stroke-width="1"/><line x1="721.5" y1="16" x2="721.5" y2="23" stroke="#555" stroke-width="1"/><text x="721.5" y="8.3" text-anchor="middle" font-family='"Liberation Sans", sans-serif' font-size="9.5" fill="#000" stroke="#000" stroke-width="0.12">70</text><line x1="731.5" y1="20" x2="731.5" y2="23" stroke="#555" stroke-width="1"/><line x1="741.5" y1="16" x2="741.5" y2="23" stroke="#555" stroke-width="1"/><text x="741.5" y="8.3" text-anchor="middle" font-family='"Liberation Sans", sans-serif' font-size="9.5" fill="#000" stroke="#000" stroke-width="0.12">72</text><line x1="751.5" y1="20" x2="751.5" y2="23" stroke="#555" stroke-width="1"/><line x1="761.5" y1="16" x2="761.5" y2="23" stroke="#555" stroke-width="1"/><text x="761.5" y="8.3" text-anchor="middle" font-family='"Liberation Sans", sans-serif' font-size="9.5" fill="#000" stroke="#000" stroke-width="0.12">74</text><line x1="771.5" y1="20" x2="771.5" y2="23" stroke="#555" stroke-width="1"/><line x1="781.5" y1="16" x2="781.5" y2="23" stroke="#555" stroke-width="1"/><text x="781.5" y="8.3" text-anchor="middle" font-family='"Liberation Sans", sans-serif' font-size="9.5" fill="#000" stroke="#000" stroke-width="0.12">76</text><line x1="791.5" y1="20" x2="791.5" y2="23" stroke="#555" stroke-width="1"/><line x1="801.5" y1="16" x2="801.5" y2="23" stroke="#555" stroke-width="1"/><text x="801.5" y="8.3" text-anchor="middle" font-family='"Liberation Sans", sans-serif' font-size="9.5" fill="#000" stroke="#000" stroke-width="0.12">78</text><line x1="811.5" y1="20" x2="811.5" y2="23" stroke="#555" stroke-width="1"/><line x1="821.5" y1="16" x2="821.5" y2="23" stroke="#555" stroke-width="1"/><text x="821.5" y="8.3" text-anchor="middle" font-family='"Liberation Sans", sans-serif' font-size="9.5" fill="#000" stroke="#000" stroke-width="0.12">80</text><line x1="831.5" y1="20" x2="831.5" y2="23" stroke="#555" stroke-width="1"/><line x1="841.5" y1="16" x2="841.5" y2="23" stroke="#555" stroke-width="1"/><text x="841.5" y="8.3" text-anchor="middle" font-family='"Liberation Sans", sans-serif' font-size="9.5" fill="#000" stroke="#000" stroke-width="0.12">82</text><line x1="851.5" y1="20" x2="851.5" y2="23" stroke="#555" stroke-width="1"/><line x1="861.5" y1="16" x2="861.5" y2="23" stroke="#555" stroke-width="1"/><text x="861.5" y="8.3" text-anchor="middle" font-family='"Liberation Sans", sans-serif' font-size="9.5" fill="#000" stroke="#000" stroke-width="0.12">84</text><line x1="871.5" y1="20" x2="871.5" y2="23" stroke="#555" stroke-width="1"/><line x1="881.5" y1="16" x2="881.5" y2="23" stroke="#555" stroke-width="1"/><text x="881.5" y="8.3" text-anchor="middle" font-family='"Liberation Sans", sans-serif' font-size="9.5" fill="#000" stroke="#000" stroke-width="0.12">86</text><line x1="891.5" y1="20" x2="891.5" y2="23" stroke="#555" stroke-width="1"/><line x1="901.5" y1="16" x2="901.5" y2="23" stroke="#555" stroke-width="1"/><text x="901.5" y="8.3" text-anchor="middle" font-family='"Liberation Sans", sans-serif' font-size="9.5" fill="#000" stroke="#000" stroke-width="0.12">88</text><line x1="911.5" y1="20" x2="911.5" y2="23" stroke="#555" stroke-width="1"/><line x1="921.5" y1="16" x2="921.5" y2="23" stroke="#555" stroke-width="1"/><text x="921.5" y="8.3" text-anchor="middle" font-family='"Liberation Sans", sans-serif' font-size="9.5" fill="#000" stroke="#000" stroke-width="0.12">90</text><line x1="931.5" y1="20" x2="931.5" y2="23" stroke="#555" stroke-width="1"/><line x1="941.5" y1="16" x2="941.5" y2="23" stroke="#555" stroke-width="1"/><text x="941.5" y="8.3" text-anchor="middle" font-family='"Liberation Sans", sans-serif' font-size="9.5" fill="#000" stroke="#000" stroke-width="0.12">92</text><line x1="951.5" y1="20" x2="951.5" y2="23" stroke="#555" stroke-width="1"/><line x1="961.5" y1="16" x2="961.5" y2="23" stroke="#555" stroke-width="1"/><text x="961.5" y="8.3" text-anchor="middle" font-family='"Liberation Sans", sans-serif' font-size="9.5" fill="#000" stroke="#000" stroke-width="0.12">94</text><line x1="971.5" y1="20" x2="971.5" y2="23" stroke="#555" stroke-width="1"/><line x1="981.5" y1="16" x2="981.5" y2="23" stroke="#555" stroke-width="1"/><text x="981.5" y="8.3" text-anchor="middle" font-family='"Liberation Sans", sans-serif' font-size="9.5" fill="#000" stroke="#000" stroke-width="0.12">96</text><line x1="991.5" y1="20" x2="991.5" y2="23" stroke="#555" stroke-width="1"/><line x1="1001.5" y1="16" x2="1001.5" y2="23" stroke="#555" stroke-width="1"/><text x="1001.5" y="8.3" text-anchor="middle" font-family='"Liberation Sans", sans-serif' font-size="9.5" fill="#000" stroke="#000" stroke-width="0.12">98</text><line x1="1011.5" y1="20" x2="1011.5" y2="23" stroke="#555" stroke-width="1"/><line x1="1021.5" y1="16" x2="1021.5" y2="23" stroke="#555" stroke-width="1"/><text x="1021.5" y="8.3" text-anchor="middle" font-family='"Liberation Sans", sans-serif' font-size="9.5" fill="#000" stroke="#000" stroke-width="0.12">100</text><line x1="1031.5" y1="20" x2="1031.5" y2="23" stroke="#555" stroke-width="1"/><line x1="1041.5" y1="16" x2="1041.5" y2="23" stroke="#555" stroke-width="1"/><text x="1041.5" y="8.3" text-anchor="middle" font-family='"Liberation Sans", sans-serif' font-size="9.5" fill="#000" stroke="#000" stroke-width="0.12">102</text><path d="M521.5 13 L533 13 L527.3 19 Z" fill="#000"/></svg><div style="position:absolute;left:72px;top:155px;width:23px;height:577px;background:#ebebeb"></div><svg width="23" height="577" style="position:absolute;left:72px;top:155px"><line x1="16" y1="578.5" x2="23" y2="578.5" stroke="#555" stroke-width="1"/><text x="0" y="0" transform="translate(9.3,578.5) rotate(-90)" text-anchor="middle" font-family='"Liberation Sans", sans-serif' font-size="9.5" fill="#000" stroke="#000" stroke-width="0.12">-20</text><line x1="20" y1="568.5" x2="23" y2="568.5" stroke="#555" stroke-width="1"/><line x1="16" y1="558.5" x2="23" y2="558.5" stroke="#555" stroke-width="1"/><text x="0" y="0" transform="translate(9.3,558.5) rotate(-90)" text-anchor="middle" font-family='"Liberation Sans", sans-serif' font-size="9.5" fill="#000" stroke="#000" stroke-width="0.12">-18</text><line x1="20" y1="548.5" x2="23" y2="548.5" stroke="#555" stroke-width="1"/><line x1="16" y1="538.5" x2="23" y2="538.5" stroke="#555" stroke-width="1"/><text x="0" y="0" transform="translate(9.3,538.5) rotate(-90)" text-anchor="middle" font-family='"Liberation Sans", sans-serif' font-size="9.5" fill="#000" stroke="#000" stroke-width="0.12">-16</text><line x1="20" y1="528.5" x2="23" y2="528.5" stroke="#555" stroke-width="1"/><line x1="16" y1="518.5" x2="23" y2="518.5" stroke="#555" stroke-width="1"/><text x="0" y="0" transform="translate(9.3,518.5) rotate(-90)" text-anchor="middle" font-family='"Liberation Sans", sans-serif' font-size="9.5" fill="#000" stroke="#000" stroke-width="0.12">-14</text><line x1="20" y1="508.5" x2="23" y2="508.5" stroke="#555" stroke-width="1"/><line x1="16" y1="498.5" x2="23" y2="498.5" stroke="#555" stroke-width="1"/><text x="0" y="0" transform="translate(9.3,498.5) rotate(-90)" text-anchor="middle" font-family='"Liberation Sans", sans-serif' font-size="9.5" fill="#000" stroke="#000" stroke-width="0.12">-12</text><line x1="20" y1="488.5" x2="23" y2="488.5" stroke="#555" stroke-width="1"/><line x1="16" y1="478.5" x2="23" y2="478.5" stroke="#555" stroke-width="1"/><text x="0" y="0" transform="translate(9.3,478.5) rotate(-90)" text-anchor="middle" font-family='"Liberation Sans", sans-serif' font-size="9.5" fill="#000" stroke="#000" stroke-width="0.12">-10</text><line x1="20" y1="468.5" x2="23" y2="468.5" stroke="#555" stroke-width="1"/><line x1="16" y1="458.5" x2="23" y2="458.5" stroke="#555" stroke-width="1"/><text x="0" y="0" transform="translate(9.3,458.5) rotate(-90)" text-anchor="middle" font-family='"Liberation Sans", sans-serif' font-size="9.5" fill="#000" stroke="#000" stroke-width="0.12">-8</text><line x1="20" y1="448.5" x2="23" y2="448.5" stroke="#555" stroke-width="1"/><line x1="16" y1="438.5" x2="23" y2="438.5" stroke="#555" stroke-width="1"/><text x="0" y="0" transform="translate(9.3,438.5) rotate(-90)" text-anchor="middle" font-family='"Liberation Sans", sans-serif' font-size="9.5" fill="#000" stroke="#000" stroke-width="0.12">-6</text><line x1="20" y1="428.5" x2="23" y2="428.5" stroke="#555" stroke-width="1"/><line x1="16" y1="418.5" x2="23" y2="418.5" stroke="#555" stroke-width="1"/><text x="0" y="0" transform="translate(9.3,418.5) rotate(-90)" text-anchor="middle" font-family='"Liberation Sans", sans-serif' font-size="9.5" fill="#000" stroke="#000" stroke-width="0.12">-4</text><line x1="20" y1="408.5" x2="23" y2="408.5" stroke="#555" stroke-width="1"/><line x1="16" y1="398.5" x2="23" y2="398.5" stroke="#555" stroke-width="1"/><text x="0" y="0" transform="translate(9.3,398.5) rotate(-90)" text-anchor="middle" font-family='"Liberation Sans", sans-serif' font-size="9.5" fill="#000" stroke="#000" stroke-width="0.12">-2</text><line x1="20" y1="388.5" x2="23" y2="388.5" stroke="#555" stroke-width="1"/><line x1="16" y1="378.5" x2="23" y2="378.5" stroke="#555" stroke-width="1"/><text x="0" y="0" transform="translate(9.3,378.5) rotate(-90)" text-anchor="middle" font-family='"Liberation Sans", sans-serif' font-size="9.5" fill="#000" stroke="#000" stroke-width="0.12">0</text><line x1="20" y1="368.5" x2="23" y2="368.5" stroke="#555" stroke-width="1"/><line x1="16" y1="358.5" x2="23" y2="358.5" stroke="#555" stroke-width="1"/><text x="0" y="0" transform="translate(9.3,358.5) rotate(-90)" text-anchor="middle" font-family='"Liberation Sans", sans-serif' font-size="9.5" fill="#000" stroke="#000" stroke-width="0.12">2</text><line x1="20" y1="348.5" x2="23" y2="348.5" stroke="#555" stroke-width="1"/><line x1="16" y1="338.5" x2="23" y2="338.5" stroke="#555" stroke-width="1"/><text x="0" y="0" transform="translate(9.3,338.5) rotate(-90)" text-anchor="middle" font-family='"Liberation Sans", sans-serif' font-size="9.5" fill="#000" stroke="#000" stroke-width="0.12">4</text><line x1="20" y1="328.5" x2="23" y2="328.5" stroke="#555" stroke-width="1"/><line x1="16" y1="318.5" x2="23" y2="318.5" stroke="#555" stroke-width="1"/><text x="0" y="0" transform="translate(9.3,318.5) rotate(-90)" text-anchor="middle" font-family='"Liberation Sans", sans-serif' font-size="9.5" fill="#000" stroke="#000" stroke-width="0.12">6</text><line x1="20" y1="308.5" x2="23" y2="308.5" stroke="#555" stroke-width="1"/><line x1="16" y1="298.5" x2="23" y2="298.5" stroke="#555" stroke-width="1"/><text x="0" y="0" transform="translate(9.3,298.5) rotate(-90)" text-anchor="middle" font-family='"Liberation Sans", sans-serif' font-size="9.5" fill="#000" stroke="#000" stroke-width="0.12">8</text><line x1="20" y1="288.5" x2="23" y2="288.5" stroke="#555" stroke-width="1"/><line x1="16" y1="278.5" x2="23" y2="278.5" stroke="#555" stroke-width="1"/><text x="0" y="0" transform="translate(9.3,278.5) rotate(-90)" text-anchor="middle" font-family='"Liberation Sans", sans-serif' font-size="9.5" fill="#000" stroke="#000" stroke-width="0.12">10</text><line x1="20" y1="268.5" x2="23" y2="268.5" stroke="#555" stroke-width="1"/><line x1="16" y1="258.5" x2="23" y2="258.5" stroke="#555" stroke-width="1"/><text x="0" y="0" transform="translate(9.3,258.5) rotate(-90)" text-anchor="middle" font-family='"Liberation Sans", sans-serif' font-size="9.5" fill="#000" stroke="#000" stroke-width="0.12">12</text><line x1="20" y1="248.5" x2="23" y2="248.5" stroke="#555" stroke-width="1"/><line x1="16" y1="238.5" x2="23" y2="238.5" stroke="#555" stroke-width="1"/><text x="0" y="0" transform="translate(9.3,238.5) rotate(-90)" text-anchor="middle" font-family='"Liberation Sans", sans-serif' font-size="9.5" fill="#000" stroke="#000" stroke-width="0.12">14</text><line x1="20" y1="228.5" x2="23" y2="228.5" stroke="#555" stroke-width="1"/><line x1="16" y1="218.5" x2="23" y2="218.5" stroke="#555" stroke-width="1"/><text x="0" y="0" transform="translate(9.3,218.5) rotate(-90)" text-anchor="middle" font-family='"Liberation Sans", sans-serif' font-size="9.5" fill="#000" stroke="#000" stroke-width="0.12">16</text><line x1="20" y1="208.5" x2="23" y2="208.5" stroke="#555" stroke-width="1"/><line x1="16" y1="198.5" x2="23" y2="198.5" stroke="#555" stroke-width="1"/><text x="0" y="0" transform="translate(9.3,198.5) rotate(-90)" text-anchor="middle" font-family='"Liberation Sans", sans-serif' font-size="9.5" fill="#000" stroke="#000" stroke-width="0.12">18</text><line x1="20" y1="188.5" x2="23" y2="188.5" stroke="#555" stroke-width="1"/><line x1="16" y1="178.5" x2="23" y2="178.5" stroke="#555" stroke-width="1"/><text x="0" y="0" transform="translate(9.3,178.5) rotate(-90)" text-anchor="middle" font-family='"Liberation Sans", sans-serif' font-size="9.5" fill="#000" stroke="#000" stroke-width="0.12">20</text><line x1="20" y1="168.5" x2="23" y2="168.5" stroke="#555" stroke-width="1"/><line x1="16" y1="158.5" x2="23" y2="158.5" stroke="#555" stroke-width="1"/><text x="0" y="0" transform="translate(9.3,158.5) rotate(-90)" text-anchor="middle" font-family='"Liberation Sans", sans-serif' font-size="9.5" fill="#000" stroke="#000" stroke-width="0.12">22</text><line x1="20" y1="148.5" x2="23" y2="148.5" stroke="#555" stroke-width="1"/><line x1="16" y1="138.5" x2="23" y2="138.5" stroke="#555" stroke-width="1"/><text x="0" y="0" transform="translate(9.3,138.5) rotate(-90)" text-anchor="middle" font-family='"Liberation Sans", sans-serif' font-size="9.5" fill="#000" stroke="#000" stroke-width="0.12">24</text><line x1="20" y1="128.5" x2="23" y2="128.5" stroke="#555" stroke-width="1"/><line x1="16" y1="118.5" x2="23" y2="118.5" stroke="#555" stroke-width="1"/><text x="0" y="0" transform="translate(9.3,118.5) rotate(-90)" text-anchor="middle" font-family='"Liberation Sans", sans-serif' font-size="9.5" fill="#000" stroke="#000" stroke-width="0.12">26</text><line x1="20" y1="108.5" x2="23" y2="108.5" stroke="#555" stroke-width="1"/><line x1="16" y1="98.5" x2="23" y2="98.5" stroke="#555" stroke-width="1"/><text x="0" y="0" transform="translate(9.3,98.5) rotate(-90)" text-anchor="middle" font-family='"Liberation Sans", sans-serif' font-size="9.5" fill="#000" stroke="#000" stroke-width="0.12">28</text><line x1="20" y1="88.5" x2="23" y2="88.5" stroke="#555" stroke-width="1"/><line x1="16" y1="78.5" x2="23" y2="78.5" stroke="#555" stroke-width="1"/><text x="0" y="0" transform="translate(9.3,78.5) rotate(-90)" text-anchor="middle" font-family='"Liberation Sans", sans-serif' font-size="9.5" fill="#000" stroke="#000" stroke-width="0.12">30</text><line x1="20" y1="68.5" x2="23" y2="68.5" stroke="#555" stroke-width="1"/><line x1="16" y1="58.5" x2="23" y2="58.5" stroke="#555" stroke-width="1"/><text x="0" y="0" transform="translate(9.3,58.5) rotate(-90)" text-anchor="middle" font-family='"Liberation Sans", sans-serif' font-size="9.5" fill="#000" stroke="#000" stroke-width="0.12">32</text><line x1="20" y1="48.5" x2="23" y2="48.5" stroke="#555" stroke-width="1"/><line x1="16" y1="38.5" x2="23" y2="38.5" stroke="#555" stroke-width="1"/><text x="0" y="0" transform="translate(9.3,38.5) rotate(-90)" text-anchor="middle" font-family='"Liberation Sans", sans-serif' font-size="9.5" fill="#000" stroke="#000" stroke-width="0.12">34</text><line x1="20" y1="28.5" x2="23" y2="28.5" stroke="#555" stroke-width="1"/><line x1="16" y1="18.5" x2="23" y2="18.5" stroke="#555" stroke-width="1"/><text x="0" y="0" transform="translate(9.3,18.5) rotate(-90)" text-anchor="middle" font-family='"Liberation Sans", sans-serif' font-size="9.5" fill="#000" stroke="#000" stroke-width="0.12">36</text><line x1="20" y1="8.5" x2="23" y2="8.5" stroke="#555" stroke-width="1"/><line x1="16" y1="-1.5" x2="23" y2="-1.5" stroke="#555" stroke-width="1"/><text x="0" y="0" transform="translate(9.3,-1.5) rotate(-90)" text-anchor="middle" font-family='"Liberation Sans", sans-serif' font-size="9.5" fill="#000" stroke="#000" stroke-width="0.12">38</text><path d="M13 127 L13 139 L19 133 Z" fill="#000"/></svg>
<svg width="1043" height="577" viewBox="0 0 1043 577" style="position:absolute;left:95px;top:155px;display:block" shape-rendering="crispEdges"><rect width="100%" height="100%" fill="#000"/><defs><pattern id="dots" x="1" y="8" width="10" height="10" patternUnits="userSpaceOnUse"><rect width="1" height="1" fill="#4a4a4a"/></pattern></defs><rect x="21" y="0" width="1" height="577" fill="#262626"/><rect x="121" y="0" width="1" height="577" fill="#262626"/><rect x="221" y="0" width="1" height="577" fill="#262626"/><rect x="321" y="0" width="1" height="577" fill="#262626"/><rect x="421" y="0" width="1" height="577" fill="#262626"/><rect x="521" y="0" width="1" height="577" fill="#262626"/><rect x="621" y="0" width="1" height="577" fill="#262626"/><rect x="721" y="0" width="1" height="577" fill="#262626"/><rect x="821" y="0" width="1" height="577" fill="#262626"/><rect x="921" y="0" width="1" height="577" fill="#262626"/><rect x="1021" y="0" width="1" height="577" fill="#262626"/><rect x="0" y="78" width="1043" height="1" fill="#262626"/><rect x="0" y="178" width="1043" height="1" fill="#262626"/><rect x="0" y="278" width="1043" height="1" fill="#262626"/><rect x="0" y="378" width="1043" height="1" fill="#262626"/><rect x="0" y="478" width="1043" height="1" fill="#262626"/><rect width="1043" height="577" fill="url(#dots)"/></svg>
<svg width="1043" height="577" viewBox="0 0 1043 577" style="position:absolute;left:95px;top:155px;display:block"><line x1="1.5" y1="378.5" x2="41.5" y2="378.5" stroke="#6a0000" stroke-width="1"/><line x1="21.5" y1="358.5" x2="21.5" y2="398.5" stroke="#6a0000" stroke-width="1"/><rect x="121.5" y="198.5" width="800" height="180" fill="none" stroke="#fff" stroke-width="2.7"/><circle cx="221.5" cy="278.5" r="40" fill="none" stroke="#c85858" stroke-width="2.2"/><circle cx="821.5" cy="278.5" r="40" fill="none" stroke="#c85858" stroke-width="2.2"/><text x="0" y="0" transform="translate(331.5,278.5) rotate(-90)" text-anchor="middle" font-family='"Liberation Sans", sans-serif' font-size="29.5" fill="#fff" textLength="179" lengthAdjust="spacingAndGlyphs">104.245.02.4B</text><line x1="221.5" y1="178" x2="221.5" y2="399" stroke="#ff1010" stroke-width="1.3" stroke-dasharray="17 6 2 8" stroke-dashoffset="14"/><line x1="821.5" y1="178" x2="821.5" y2="399" stroke="#ff1010" stroke-width="1.3" stroke-dasharray="17 6 2 8" stroke-dashoffset="14"/><line x1="106" y1="278.5" x2="936" y2="278.5" stroke="#a85050" stroke-width="1" stroke-dasharray="17 6 2 8" stroke-dashoffset="6"/><rect x="216.4" y="233.4" width="10.2" height="10.2" fill="#0a80b4" stroke="#7aa6c0" stroke-width="0.8"/><rect x="216.4" y="313.4" width="10.2" height="10.2" fill="#0a80b4" stroke="#7aa6c0" stroke-width="0.8"/><rect x="176.4" y="273.4" width="10.2" height="10.2" fill="#0a80b4" stroke="#7aa6c0" stroke-width="0.8"/><rect x="256.4" y="273.4" width="10.2" height="10.2" fill="#0a80b4" stroke="#7aa6c0" stroke-width="0.8"/><circle cx="221.5" cy="278.5" r="4.8" fill="#0000b8" stroke="#8080e0" stroke-width="0.8"/><rect x="816.4" y="233.4" width="10.2" height="10.2" fill="#0a80b4" stroke="#7aa6c0" stroke-width="0.8"/><rect x="816.4" y="313.4" width="10.2" height="10.2" fill="#0a80b4" stroke="#7aa6c0" stroke-width="0.8"/><rect x="776.4" y="273.4" width="10.2" height="10.2" fill="#0a80b4" stroke="#7aa6c0" stroke-width="0.8"/><rect x="856.4" y="273.4" width="10.2" height="10.2" fill="#0a80b4" stroke="#7aa6c0" stroke-width="0.8"/><circle cx="821.5" cy="278.5" r="4.8" fill="#0000b8" stroke="#8080e0" stroke-width="0.8"/><rect x="96.5" y="273.5" width="11" height="11" fill="#0000c0" stroke="#8080d0" stroke-width="0.8"/><circle cx="101.5" cy="278.5" r="4.6" fill="none" stroke="#e00000" stroke-width="0.7"/><line x1="96.5" y1="278.5" x2="106.5" y2="278.5" stroke="#e00000" stroke-width="0.8"/><line x1="101.5" y1="273.5" x2="101.5" y2="283.5" stroke="#e00000" stroke-width="0.8"/><rect x="936.5" y="273.5" width="11" height="11" fill="#c0102a" stroke="#d07080" stroke-width="0.8"/><defs><radialGradient id="ring" cx="0.5" cy="0.5" r="0.5"><stop offset="0.74" stop-color="#000" stop-opacity="0"/><stop offset="0.82" stop-color="#2a3640" stop-opacity="0.8"/><stop offset="0.9" stop-color="#5a6a7a" stop-opacity="0.85"/><stop offset="0.96" stop-color="#7a8a98" stop-opacity="0.85"/><stop offset="1" stop-color="#6a7a88" stop-opacity="0.5"/></radialGradient></defs><circle cx="526.8" cy="133" r="39.5" fill="url(#ring)"/><path d="M526.3 132.4 L526.3 156.0 L531.0 151.5 L535.3 161.5 L539.6 159.6 L535.4 150.2 L543.0 149.6 Z" fill="none" stroke="#fff" stroke-width="3.2" stroke-linejoin="round"/><path d="M526.3 132.4 L526.3 156.0 L531.0 151.5 L535.3 161.5 L539.6 159.6 L535.4 150.2 L543.0 149.6 Z" fill="#fff" stroke="#000" stroke-width="1.3" stroke-linejoin="round"/></svg>
<div class="a" style="left:1138px;top:155px;width:16px;height:594px;background:#fafafa"></div>
<div class="a" style="left:72px;top:732px;width:23px;height:17px;background:#ececec"></div>
<div class="a" style="left:95px;top:732px;width:1059px;height:18px;background:#fafafa;border-bottom:1px solid #c0c0c0;box-sizing:border-box"></div>
<div class="a" style="left:1143px;top:282px;width:8px;height:322px;background:#808080;border-radius:4px"></div>
<div class="a" style="left:280px;top:737px;width:634px;height:8px;background:#7d7d7d;border-radius:4px"></div>
<div class="a" style="left:1099px;top:732px;width:55px;height:16px;background:#ececec"></div>
<div class="t" style="right:347px;top:733.5px;font-size:12.2px;line-height:15px;color:#000">1 &lt; 10</div>
<div class="a" style="left:1153px;top:108px;width:2px;height:690px;background:#c4c4c4"></div>
<div class="a" style="left:72px;top:750px;width:1081px;height:21px;background:#fff;border-bottom:1px solid #c8c8c8;box-sizing:border-box"></div>
<div class="t" style="left:77px;top:751px;font-size:13.3px;line-height:16px;color:#000">Undo: Move Selection</div>
<div class="a" style="left:72px;top:771px;width:1081px;height:27px;background:#ececec"></div>
<div class="t" style="left:73px;top:778px;font-size:13px;line-height:16px;color:#111">Command:</div>
<div class="a" style="left:142px;top:776px;width:985px;height:18px;background:#fff"></div>
<div class="a" style="left:1127px;top:772px;width:26px;height:26px;background:linear-gradient(#f4f4f4,#e4e4e4);border:1px solid #bdbdbd;box-sizing:border-box"></div>
<div class="a" style="left:1133px;top:779px;width:14px;height:11px;border:1px solid #222;border-top:3px solid #111;box-sizing:border-box;background:#f0f0f0"></div>
<div class="a" style="left:0;top:798px;width:1500px;height:46px;background:#dcdcdc"></div>
<div class="t" style="left:2px;top:806px;font-size:10.5px;line-height:13px;color:#111">50.5497,24.5408</div>
<div class="t" style="left:2px;top:826px;font-size:10.5px;line-height:13px;color:#111">@42.5497,14.5408</div>
<div class="a" style="left:254px;top:802px;width:1px;height:40px;background:#888"></div>
<div class="t" style="left:256px;top:806px;font-size:10.5px;line-height:13px;color:#111">56.1918&lt;26°</div>
<div class="t" style="left:256px;top:826px;font-size:10.5px;line-height:13px;color:#111">@44.9656&lt;19°</div>
<div class="a" style="left:506px;top:818px;width:7px;height:7px;border-radius:50%;background:#c4c4c4"></div>
<div class="t" style="right:801.5px;top:810.5px;font-size:10px;letter-spacing:0.1px;line-height:11.2px;color:#111;text-align:right">Select entity or region<br>Move entity or reference</div>
<svg class="a" style="left:716px;top:805px" width="20" height="32" viewBox="0 0 20 32"><rect x="1.5" y="1.5" width="17" height="29" rx="8.5" ry="9.5" fill="#fff" stroke="#444" stroke-width="1"/><path d="M1.7 13.5 C6 12 14 12 18.3 13.5" fill="none" stroke="#444" stroke-width="1.1"/><rect x="8.3" y="3.5" width="3.4" height="7" rx="1.7" fill="#fff" stroke="#444" stroke-width="0.9"/><line x1="10" y1="10.5" x2="10" y2="13" stroke="#444" stroke-width="0.8"/></svg>
<div class="a" style="left:940px;top:818px;width:7px;height:7px;border-radius:50%;background:#c4c4c4"></div>
<div class="t" style="left:949px;top:810.5px;font-size:10px;letter-spacing:0.1px;line-height:11.2px;color:#111">Selected entities:<br>3 Entities on 2 Layers.</div>
<div class="a" style="left:1268px;top:818px;width:7px;height:7px;border-radius:50%;background:#c4c4c4"></div>
<div class="a" style="left:1155px;top:108px;width:299px;height:690px;background:#fff;border-left:1px solid #bdbdbd;border-right:1px solid #c8c8c8;box-sizing:border-box"></div><div class="a" style="left:1155px;top:108px;width:299px;height:22px;background:linear-gradient(#ececec,#e0e0e0);border-left:1px solid #bdbdbd;box-sizing:border-box"></div><div class="t" style="left:1296.5px;top:112.5px;font-size:12.2px;line-height:15px;color:#111">Layer List</div><svg class="a" style="left:1156px;top:110px" width="34" height="16" viewBox="0 0 34 16">
      <circle cx="8" cy="8" r="6.8" fill="#6a6a6a"/><path d="M5.3 5.3 L10.7 10.7 M10.7 5.3 L5.3 10.7" stroke="#fff" stroke-width="1.7"/>
      <circle cx="26" cy="8" r="6.8" fill="#6a6a6a"/><rect x="22.5" y="7.5" width="5.5" height="4" fill="none" stroke="#fff" stroke-width="1"/><path d="M24.5 7.5 L24.5 5.5 L29.5 5.5 L29.5 9.5 L28 9.5" fill="none" stroke="#fff" stroke-width="1"/></svg><div class="a" style="left:1155px;top:130px;width:60px;height:27px;border:1px solid #c2c2c2;border-bottom:2px solid #c2c2c2;box-sizing:border-box;background:linear-gradient(#fafafa,#eaeaea)"></div><div class="a" style="left:1214px;top:130px;width:61px;height:27px;border:1px solid #c2c2c2;border-bottom:2px solid #c2c2c2;box-sizing:border-box;background:linear-gradient(#fafafa,#eaeaea)"></div><div class="a" style="left:1274px;top:130px;width:61px;height:27px;border:1px solid #c2c2c2;border-bottom:2px solid #c2c2c2;box-sizing:border-box;background:linear-gradient(#fafafa,#eaeaea)"></div><div class="a" style="left:1334px;top:130px;width:61px;height:27px;border:1px solid #c2c2c2;border-bottom:2px solid #c2c2c2;box-sizing:border-box;background:linear-gradient(#fafafa,#eaeaea)"></div><div class="a" style="left:1394px;top:130px;width:61px;height:27px;border:1px solid #c2c2c2;border-bottom:2px solid #c2c2c2;box-sizing:border-box;background:linear-gradient(#fafafa,#eaeaea)"></div><svg class="a" style="left:1177px;top:137px" width="16" height="12" viewBox="0 0 16 12">
      <path d="M0.4 5.6 C2 -0.2 14 -0.2 15.6 5.6 C14.2 11.6 1.8 11.6 0.4 5.6 Z" fill="#000"/>
      <path d="M2.8 4.6 C3.4 10 12.6 10 13.2 4.6 L11.9 4.6 C11 7.8 5 7.8 4.1 4.6 Z" fill="#fff"/>
      <circle cx="7.9" cy="5.1" r="2.7" fill="#000"/><circle cx="7.2" cy="4.2" r="0.7" fill="#777"/></svg><svg class="a" style="left:1237px;top:137px" width="16" height="12" viewBox="0 0 16 12">
      <path d="M0.4 5.6 C2 -0.2 14 -0.2 15.6 5.6 C14.2 11.6 1.8 11.6 0.4 5.6 Z" fill="#b4b4b4"/>
      <path d="M2.8 4.6 C3.4 10 12.6 10 13.2 4.6 L11.9 4.6 C11 7.8 5 7.8 4.1 4.6 Z" fill="#fff"/>
      <circle cx="7.9" cy="5.1" r="2.7" fill="#b4b4b4"/><circle cx="7.2" cy="4.2" r="0.7" fill="#777"/></svg><svg class="a" style="left:1297px;top:135px" width="16" height="16" viewBox="0 0 16 16"><path d="M8 1.5 L8 14.5 M1.5 8 L14.5 8" stroke="#e00000" stroke-width="3"/></svg><div class="a" style="left:1359px;top:141px;width:12px;height:4px;background:#e00000"></div><svg class="a" style="left:1416px;top:134px" width="18" height="18" viewBox="0 0 16 16">
      <path d="M1.5 14.5 L2.8 10.8 L12.2 1.4 L14.6 3.8 L5.2 13.2 Z" fill="#e8a830" stroke="#9a6a10" stroke-width="0.6"/>
      <path d="M12.2 1.4 L13.2 0.5 L15.5 2.8 L14.6 3.8 Z" fill="#e03020"/>
      <path d="M1.5 14.5 L2.3 12.2 L3.8 13.7 Z" fill="#333"/></svg><div class="a" style="left:1161px;top:163px;width:16px;height:9px;background:#fff;border:1px solid #000;box-sizing:border-box"></div><div class="t" style="left:1183px;top:159px;font-size:13.8px;line-height:17px;color:#000">0</div><svg class="a" style="left:1415px;top:161px" width="16" height="12" viewBox="0 0 16 12">
      <path d="M0.4 5.6 C2 -0.2 14 -0.2 15.6 5.6 C14.2 11.6 1.8 11.6 0.4 5.6 Z" fill="#000"/>
      <path d="M2.8 4.6 C3.4 10 12.6 10 13.2 4.6 L11.9 4.6 C11 7.8 5 7.8 4.1 4.6 Z" fill="#fff"/>
      <circle cx="7.9" cy="5.1" r="2.7" fill="#000"/><circle cx="7.2" cy="4.2" r="0.7" fill="#777"/></svg><svg class="a" style="left:1439px;top:159px" width="12" height="16" viewBox="0 0 12 16">
      <path d="M2.5 8 L2.5 5 A3.5 3.5 0 0 1 9.5 5 L9.5 8" fill="none" stroke="#b6b6b6" stroke-width="1.7"/>
      <rect x="1" y="7.5" width="10" height="7.5" fill="#b6b6b6"/></svg><div class="a" style="left:1161px;top:183px;width:16px;height:9px;background:#ff0000;border:1px solid #000;box-sizing:border-box"></div><div class="t" style="left:1183px;top:179px;font-size:13.8px;line-height:17px;color:#000">Center</div><svg class="a" style="left:1415px;top:181px" width="16" height="12" viewBox="0 0 16 12">
      <path d="M0.4 5.6 C2 -0.2 14 -0.2 15.6 5.6 C14.2 11.6 1.8 11.6 0.4 5.6 Z" fill="#000"/>
      <path d="M2.8 4.6 C3.4 10 12.6 10 13.2 4.6 L11.9 4.6 C11 7.8 5 7.8 4.1 4.6 Z" fill="#fff"/>
      <circle cx="7.9" cy="5.1" r="2.7" fill="#000"/><circle cx="7.2" cy="4.2" r="0.7" fill="#777"/></svg><svg class="a" style="left:1439px;top:179px" width="12" height="16" viewBox="0 0 12 16">
      <path d="M2.5 8 L2.5 5 A3.5 3.5 0 0 1 9.5 5 L9.5 8" fill="none" stroke="#b6b6b6" stroke-width="1.7"/>
      <rect x="1" y="7.5" width="10" height="7.5" fill="#b6b6b6"/></svg><div class="a" style="left:1161px;top:203px;width:16px;height:9px;background:#000;border:1px solid #000;box-sizing:border-box"></div><div class="t" style="left:1183px;top:199px;font-size:13.8px;line-height:17px;color:#000">Hidden</div><svg class="a" style="left:1415px;top:201px" width="16" height="12" viewBox="0 0 16 12">
      <path d="M0.4 5.6 C2 -0.2 14 -0.2 15.6 5.6 C14.2 11.6 1.8 11.6 0.4 5.6 Z" fill="#000"/>
      <path d="M2.8 4.6 C3.4 10 12.6 10 13.2 4.6 L11.9 4.6 C11 7.8 5 7.8 4.1 4.6 Z" fill="#fff"/>
      <circle cx="7.9" cy="5.1" r="2.7" fill="#000"/><circle cx="7.2" cy="4.2" r="0.7" fill="#777"/></svg><svg class="a" style="left:1439px;top:199px" width="12" height="16" viewBox="0 0 12 16">
      <path d="M2.5 8 L2.5 5 A3.5 3.5 0 0 1 9.5 5 L9.5 8" fill="none" stroke="#b6b6b6" stroke-width="1.7"/>
      <rect x="1" y="7.5" width="10" height="7.5" fill="#b6b6b6"/></svg><div class="a" style="left:1161px;top:223px;width:16px;height:9px;background:#fff;border:1px solid #000;box-sizing:border-box"></div><div class="t" style="left:1183px;top:219px;font-size:13.8px;line-height:17px;color:#000">Visible</div><svg class="a" style="left:1415px;top:221px" width="16" height="12" viewBox="0 0 16 12">
      <path d="M0.4 5.6 C2 -0.2 14 -0.2 15.6 5.6 C14.2 11.6 1.8 11.6 0.4 5.6 Z" fill="#000"/>
      <path d="M2.8 4.6 C3.4 10 12.6 10 13.2 4.6 L11.9 4.6 C11 7.8 5 7.8 4.1 4.6 Z" fill="#fff"/>
      <circle cx="7.9" cy="5.1" r="2.7" fill="#000"/><circle cx="7.2" cy="4.2" r="0.7" fill="#777"/></svg><svg class="a" style="left:1439px;top:219px" width="12" height="16" viewBox="0 0 12 16">
      <path d="M2.5 8 L2.5 5 A3.5 3.5 0 0 1 9.5 5 L9.5 8" fill="none" stroke="#b6b6b6" stroke-width="1.7"/>
      <rect x="1" y="7.5" width="10" height="7.5" fill="#b6b6b6"/></svg><svg class="a" style="left:1393px;top:219px" width="16" height="16" viewBox="0 0 16 16">
      <path d="M1.5 14.5 L2.8 10.8 L12.2 1.4 L14.6 3.8 L5.2 13.2 Z" fill="#e8a830" stroke="#9a6a10" stroke-width="0.6"/>
      <path d="M12.2 1.4 L13.2 0.5 L15.5 2.8 L14.6 3.8 Z" fill="#e03020"/>
      <path d="M1.5 14.5 L2.3 12.2 L3.8 13.7 Z" fill="#333"/></svg>
<div class="a" style="left:1454px;top:108px;width:46px;height:690px;background:linear-gradient(90deg,#f2f2f2,#e6e6e6 40%,#c6c6c6);border-left:1px solid #d8d8d8;box-sizing:border-box"></div><div class="a" style="left:1462.0px;top:116px;width:2px;height:2px;background:#b0b0b0"></div><div class="a" style="left:1467.2px;top:116px;width:2px;height:2px;background:#b0b0b0"></div><div class="a" style="left:1472.4px;top:116px;width:2px;height:2px;background:#b0b0b0"></div><div class="a" style="left:1477.6px;top:116px;width:2px;height:2px;background:#b0b0b0"></div><div class="a" style="left:1482.8px;top:116px;width:2px;height:2px;background:#b0b0b0"></div><div class="a" style="left:1488.0px;top:116px;width:2px;height:2px;background:#b0b0b0"></div><div class="a" style="left:1456px;top:120px;width:43px;height:43px;background:#b8b8b8;border-radius:6px"></div><svg class="a" style="left:1463px;top:127px;" width="28" height="28" viewBox="0 0 28 28"><rect x="0.5" y="0.5" width="27" height="27" fill="#fff" stroke="#000" stroke-width="1"/><rect x="0" y="0" width="28" height="4.5" fill="#000"/><rect x="1.5" y="1" width="2.6" height="2.6" fill="#fff"/><path d="M7 12 L13 9 L13 22 L7 25 Z" fill="#8a8a8a" stroke="#444" stroke-width="0.6"/><path d="M10 11 L22 7 L22 19 L10 23 Z" fill="#fff" stroke="#555" stroke-width="0.8"/><path d="M13 19 L17 11 L19 18 Z" fill="none" stroke="#e02020" stroke-width="1"/></svg><svg class="a" style="left:1463px;top:174px;" width="28" height="28" viewBox="0 0 28 28"><rect x="0.5" y="0.5" width="27" height="27" fill="#fff" stroke="#000" stroke-width="1"/><rect x="0" y="0" width="28" height="4.5" fill="#000"/><rect x="1.5" y="1" width="2.6" height="2.6" fill="#fff"/><rect x="7" y="9" width="11" height="9" fill="#f4e4b0" stroke="#333" stroke-width="0.8"/><circle cx="17" cy="18" r="5" fill="#f4e4b0" stroke="#333" stroke-width="0.8"/></svg><svg class="a" style="left:1463px;top:220px;" width="28" height="28" viewBox="0 0 28 28"><rect x="0.5" y="0.5" width="27" height="27" fill="#fff" stroke="#000" stroke-width="1"/><rect x="0" y="0" width="28" height="4.5" fill="#000"/><rect x="1.5" y="1" width="2.6" height="2.6" fill="#fff"/><rect x="5" y="9" width="19" height="13" rx="3" fill="#f6f6f6" stroke="#bcd0e8" stroke-width="1"/></svg><div class="a" style="left:1459px;top:261px;width:1px;height:1px;background:#777"></div><div class="a" style="left:1463px;top:261px;width:1px;height:1px;background:#777"></div><div class="a" style="left:1467px;top:261px;width:1px;height:1px;background:#777"></div><div class="a" style="left:1471px;top:261px;width:1px;height:1px;background:#777"></div><div class="a" style="left:1475px;top:261px;width:1px;height:1px;background:#777"></div><div class="a" style="left:1479px;top:261px;width:1px;height:1px;background:#777"></div><div class="a" style="left:1483px;top:261px;width:1px;height:1px;background:#777"></div><div class="a" style="left:1487px;top:261px;width:1px;height:1px;background:#777"></div><div class="a" style="left:1491px;top:261px;width:1px;height:1px;background:#777"></div><div class="a" style="left:1495px;top:261px;width:1px;height:1px;background:#777"></div><svg class="a" style="left:1463px;top:276px;" width="28" height="28" viewBox="0 0 28 28"><rect x="0.5" y="0.5" width="27" height="27" fill="#fff" stroke="#000" stroke-width="1"/><rect x="0" y="0" width="28" height="4.5" fill="#000"/><rect x="1.5" y="1" width="2.6" height="2.6" fill="#fff"/><rect x="5" y="9" width="4" height="3" fill="#000"/><rect x="5" y="15" width="4" height="3" fill="#000"/><rect x="5" y="21" width="4" height="3" fill="#000"/><rect x="11.5" y="8.5" width="12" height="4" fill="none" stroke="#000" stroke-width="0.8"/><rect x="11.5" y="14.5" width="12" height="4" fill="none" stroke="#000" stroke-width="0.8"/><rect x="11.5" y="20.5" width="12" height="4" fill="none" stroke="#000" stroke-width="0.8"/></svg><svg class="a" style="left:1463px;top:322px;" width="28" height="28" viewBox="0 0 28 28"><rect x="0.5" y="0.5" width="27" height="27" fill="#fff" stroke="#000" stroke-width="1"/><rect x="0" y="0" width="28" height="4.5" fill="#000"/><rect x="1.5" y="1" width="2.6" height="2.6" fill="#fff"/><path d="M7 9 L22 9 L16 16 L16 23 L13 21 L13 16 Z" fill="#b8b8b8" stroke="#555" stroke-width="0.8"/></svg><svg class="a" style="left:1463px;top:368px;" width="28" height="28" viewBox="0 0 28 28"><rect x="0.5" y="0.5" width="27" height="27" fill="#fff" stroke="#000" stroke-width="1"/><rect x="0" y="0" width="28" height="4.5" fill="#000"/><rect x="1.5" y="1" width="2.6" height="2.6" fill="#fff"/><path d="M7 10 L12 13 L12 20 L7 23 Z" fill="#fff" stroke="#333" stroke-width="0.9"/><rect x="12" y="13" width="9" height="7" fill="#999" stroke="#333" stroke-width="0.6"/><line x1="5" y1="16.5" x2="25" y2="16.5" stroke="#e07070" stroke-width="0.8"/></svg><div class="a" style="left:1459px;top:409px;width:1px;height:1px;background:#777"></div><div class="a" style="left:1463px;top:409px;width:1px;height:1px;background:#777"></div><div class="a" style="left:1467px;top:409px;width:1px;height:1px;background:#777"></div><div class="a" style="left:1471px;top:409px;width:1px;height:1px;background:#777"></div><div class="a" style="left:1475px;top:409px;width:1px;height:1px;background:#777"></div><div class="a" style="left:1479px;top:409px;width:1px;height:1px;background:#777"></div><div class="a" style="left:1483px;top:409px;width:1px;height:1px;background:#777"></div><div class="a" style="left:1487px;top:409px;width:1px;height:1px;background:#777"></div><div class="a" style="left:1491px;top:409px;width:1px;height:1px;background:#777"></div><div class="a" style="left:1495px;top:409px;width:1px;height:1px;background:#777"></div><div class="a" style="left:1456px;top:417px;width:43px;height:43px;background:#b8b8b8;border-radius:6px"></div><svg class="a" style="left:1463px;top:424px;" width="28" height="28" viewBox="0 0 28 28"><rect x="0.5" y="0.5" width="27" height="27" fill="#fff" stroke="#000" stroke-width="1"/><rect x="0" y="0" width="28" height="4.5" fill="#000"/><rect x="1.5" y="1" width="2.6" height="2.6" fill="#fff"/><path d="M3 9 L15 9 M3 12 L14 12 M3 15 L15 15 M3 18 L14 18" stroke="#666" stroke-width="0.8"/><line x1="1" y1="22.5" x2="28" y2="22.5" stroke="#000" stroke-width="0.8"/><path d="M3 25 L6 25 M10 25 L22 25" stroke="#555" stroke-width="0.8"/></svg><svg class="a" style="left:1463px;top:471px;" width="28" height="28" viewBox="0 0 28 28"><rect x="0.5" y="0.5" width="27" height="27" fill="#fff" stroke="#000" stroke-width="1"/><rect x="0" y="0" width="28" height="4.5" fill="#000"/><rect x="1.5" y="1" width="2.6" height="2.6" fill="#fff"/><rect x="8" y="9" width="13" height="15" rx="1" fill="#c48a28" stroke="#8a5e14" stroke-width="0.7"/><rect x="10" y="11" width="9" height="11" fill="#fafafa"/><rect x="11.5" y="7.5" width="6" height="3" fill="#8a8a82"/></svg>
</div></body></html>
